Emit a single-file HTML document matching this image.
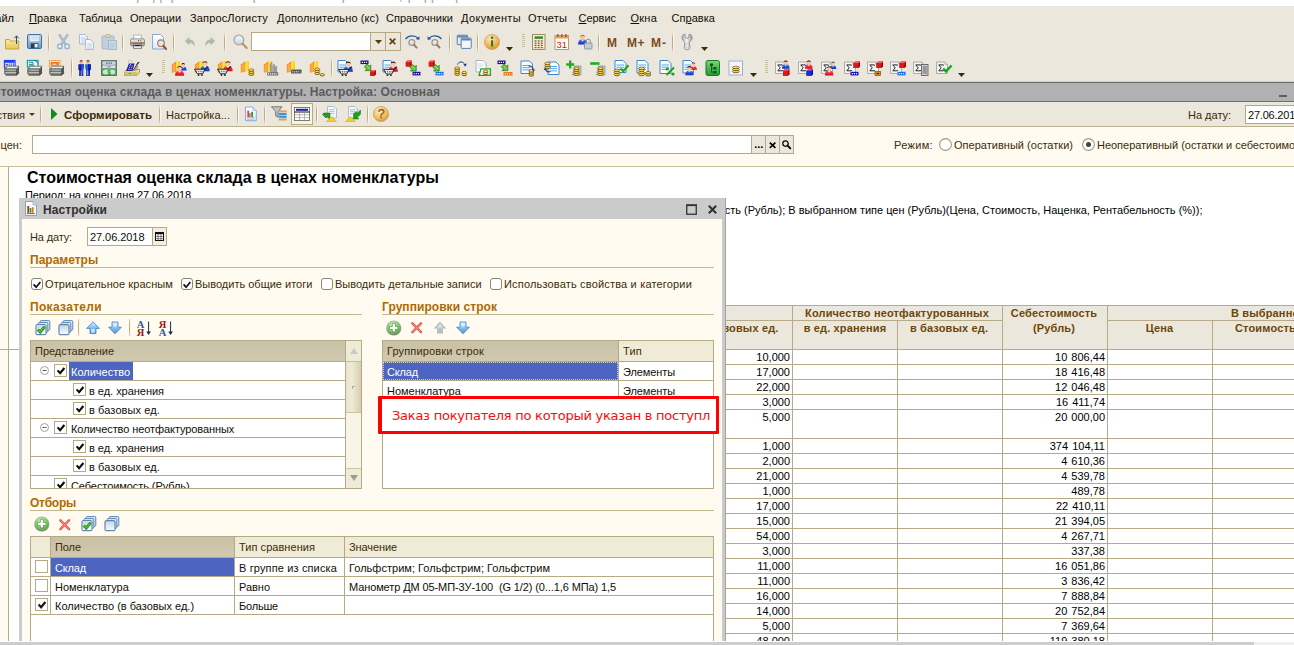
<!DOCTYPE html>
<html lang="ru"><head><meta charset="utf-8"><title>Стоимостная оценка склада в ценах номенклатуры</title>
<style>
html,body{margin:0;padding:0;}
body{width:1294px;height:645px;overflow:hidden;background:#fff;font-family:"Liberation Sans",sans-serif;font-size:11px;color:#000;}
#root{position:absolute;left:0;top:0;width:1294px;height:645px;overflow:hidden;background:#fff;}
#root div{position:absolute;box-sizing:border-box;}
svg{position:absolute;overflow:visible;}
.t{position:absolute;white-space:nowrap;font-size:11px;line-height:14px;height:14px;margin-top:-11px;color:#120e06;}
.b{font-weight:bold;}
.br{color:#3d2b0a;}
.hd{font-weight:bold;color:#b06a02;font-size:12px;}
.w{color:#fff;}
.ar{color:#000;}
.rh{font-weight:bold;color:#6b4808;letter-spacing:0.15px;}
.title{font-size:16px;font-weight:bold;line-height:20px;height:20px;margin-top:-16px;color:#000;}
.red{font-family:"DejaVu Sans",sans-serif;font-size:13px;color:#ff0a0a;line-height:16px;height:16px;margin-top:-13px;}

</style></head>
<body>
<div id="root">
<div style="left:0px;top:0px;width:500px;height:6px;background:#fff;overflow:hidden;"><span class="t" style="left:125px;top:-1px;font-size:15px;color:#a8a8a8;letter-spacing:0.3px;">Предприятие - Управление торговлей, редакция 10.3 / Администратор</span></div>
<div style="left:0px;top:6px;width:1294px;height:76px;background:#ece7dc;"></div>
<span id="t1" class="t " style="right:1280px;top:21.5px;">Файл</span>
<span id="t2" class="t" style="left:29px;top:21.5px;letter-spacing:0.138px;"><u>П</u>равка</span>
<span id="t3" class="t " style="left:79px;top:21.5px;letter-spacing:-0.020px;">Таблица</span>
<span id="t4" class="t " style="left:130px;top:21.5px;letter-spacing:-0.059px;">Операции</span>
<span id="t5" class="t " style="left:190px;top:21.5px;letter-spacing:0.145px;">ЗапросЛогисту</span>
<span id="t6" class="t " style="left:277px;top:21.5px;letter-spacing:0.111px;">Дополнительно (кс)</span>
<span id="t7" class="t " style="left:386px;top:21.5px;letter-spacing:0.033px;">Справочники</span>
<span id="t8" class="t " style="left:461px;top:21.5px;letter-spacing:0.366px;">Документы</span>
<span id="t9" class="t " style="left:528px;top:21.5px;letter-spacing:0.161px;">Отчеты</span>
<span id="t10" class="t" style="left:578.5px;top:21.5px;letter-spacing:-0.031px;"><u>С</u>ервис</span>
<span id="t11" class="t" style="left:630.5px;top:21.5px;letter-spacing:0.230px;"><u>О</u>кна</span>
<span id="t12" class="t" style="left:671.5px;top:21.5px;letter-spacing:0.047px;">Сп<u>р</u>авка</span>
<svg width="0" height="0" style="left:0;top:0"><defs><linearGradient id="gFold" x1="0" y1="0" x2="0" y2="1"><stop offset="0" stop-color="#fbe9a0"/><stop offset="1" stop-color="#e8c558"/></linearGradient><linearGradient id="gSave" x1="0" y1="0" x2="0" y2="1"><stop offset="0" stop-color="#c4dcf0"/><stop offset="1" stop-color="#6a9ac8"/></linearGradient><linearGradient id="gPage" x1="0" y1="0" x2="0" y2="1"><stop offset="0" stop-color="#ffffff"/><stop offset="1" stop-color="#dbe9f7"/></linearGradient><linearGradient id="gOr" x1="0" y1="0" x2="1" y2="0"><stop offset="0" stop-color="#ffd24a"/><stop offset="1" stop-color="#f08a12"/></linearGradient><linearGradient id="gOrange" x1="0" y1="0" x2="0" y2="1"><stop offset="0" stop-color="#ffdf9a"/><stop offset="1" stop-color="#e79a2a"/></linearGradient><linearGradient id="gRed" x1="0" y1="0" x2="0" y2="1"><stop offset="0" stop-color="#ff5a5a"/><stop offset="1" stop-color="#d80016"/></linearGradient><linearGradient id="gBlue" x1="0" y1="0" x2="0" y2="1"><stop offset="0" stop-color="#4a7cf0"/><stop offset="1" stop-color="#0a2fc0"/></linearGradient><linearGradient id="gGreen" x1="0" y1="0" x2="0" y2="1"><stop offset="0" stop-color="#7ad67a"/><stop offset="1" stop-color="#1f9a2c"/></linearGradient><linearGradient id="gGold" x1="0" y1="0" x2="0" y2="1"><stop offset="0" stop-color="#fff27a"/><stop offset="1" stop-color="#f0b000"/></linearGradient><linearGradient id="gGrey" x1="0" y1="0" x2="0" y2="1"><stop offset="0" stop-color="#f4f4f4"/><stop offset="1" stop-color="#a8a8a8"/></linearGradient><linearGradient id="gLens" x1="0" y1="0" x2="0" y2="1"><stop offset="0" stop-color="#f4f9ff"/><stop offset="1" stop-color="#bcd6f2"/></linearGradient><linearGradient id="gUp" x1="0" y1="0" x2="0" y2="1"><stop offset="0" stop-color="#d9ecff"/><stop offset="1" stop-color="#3f8fe0"/></linearGradient></defs></svg>
<svg style="left:4px;top:34px" width="16" height="16" viewBox="0 0 16 16"><path d="M1.5 5.5 h4 l1.2 1.5 h8 v8 h-13.2z" fill="url(#gFold)" stroke="#c9a23c" stroke-width="1"/><path d="M12.5 10 V2.2 M10.3 4.3 L12.5 1.8 L14.7 4.3" fill="none" stroke="#24566a" stroke-width="1"/></svg>
<svg style="left:27px;top:34px" width="16" height="16" viewBox="0 0 16 16"><rect x="0.5" y="0.5" width="14" height="14" rx="1.3" fill="url(#gSave)" stroke="#3f6f9c"/><rect x="2.8" y="1.2" width="9.4" height="6" fill="#f4f9ff" stroke="#9bbad6" stroke-width=".6"/><path d="M4 3.2h7.5M4 5h7.5" stroke="#a7cde6" stroke-width=".9"/><rect x="3.8" y="9.3" width="7.6" height="4.8" fill="#2b3f55"/><rect x="7.6" y="10" width="3.1" height="3.5" fill="#e8eef5"/></svg>
<div style="left:48px;top:33px;width:1px;height:19px;background:linear-gradient(#e4dcc4,#b9ac84 30%,#b9ac84 70%,#e4dcc4);"></div>
<div style="left:49px;top:33px;width:1px;height:19px;background:linear-gradient(#f3efe2,#fbf8ee 30%,#fbf8ee 70%,#f3efe2);"></div>
<svg style="left:56.5px;top:34px" width="16" height="16" viewBox="0 0 16 16"><path d="M2.2 0.4 L8.6 10.4 M10.8 0.4 L4.4 10.4" stroke="#9bb3c9" stroke-width="2.5" fill="none"/><path d="M2.6 0.8 L8.2 9.6 M10.4 0.8 L4.8 9.6" stroke="#b9cbdb" stroke-width=".7" fill="none"/><rect x="0.9" y="10.3" width="4" height="4.2" rx=".9" fill="#edf1f5" stroke="#9bb3c9" stroke-width="1.5"/><rect x="8.1" y="10.3" width="4" height="4.2" rx=".9" fill="#edf1f5" stroke="#9bb3c9" stroke-width="1.5"/></svg>
<svg style="left:78px;top:34px" width="16" height="16" viewBox="0 0 16 16"><path d="M1.5 0.5h5.5l2.5 2.5v7h-8z" fill="#eef4fb" stroke="#9fb6cf" stroke-width=".9"/><path d="M3 4h5M3 6h5M3 8h5" stroke="#b7c7d8" stroke-width=".8"/><path d="M7.5 5.5h5l3 3v7h-8z" fill="#f4f8fd" stroke="#9fb6cf" stroke-width=".9"/><path d="M9 10h5M9 12h5M9 14h5" stroke="#b0c2d6" stroke-width=".8"/></svg>
<svg style="left:101px;top:34px" width="16" height="16" viewBox="0 0 16 16"><rect x="1" y="2" width="12" height="13" rx="1" fill="#c3d0dc" stroke="#9fb3c6" stroke-width=".9"/><rect x="4.5" y="0.5" width="5" height="3" rx="1" fill="#d9d2b3" stroke="#b3ac8d" stroke-width=".7"/><rect x="7.5" y="6.5" width="8" height="9" fill="#c9d8e6" stroke="#9fb6cf" stroke-width=".9"/><path d="M9 10h5M9 12h5M9 14h4" stroke="#a9bfd4" stroke-width=".8"/></svg>
<div style="left:122px;top:33px;width:1px;height:19px;background:linear-gradient(#e4dcc4,#b9ac84 30%,#b9ac84 70%,#e4dcc4);"></div>
<div style="left:123px;top:33px;width:1px;height:19px;background:linear-gradient(#f3efe2,#fbf8ee 30%,#fbf8ee 70%,#f3efe2);"></div>
<svg style="left:130px;top:34px" width="15" height="15.5" viewBox="0 0 16 16"><rect x="4" y="0.8" width="8" height="5.5" fill="#f8fbff" stroke="#9aa7b8" stroke-width=".8"/><rect x="0.6" y="5" width="14.8" height="7.5" rx="1.5" fill="url(#gGrey)" stroke="#7d746c" stroke-width=".9"/><rect x="0.8" y="8.3" width="14.4" height="2.2" fill="#a3877c"/><rect x="8.5" y="6.3" width="1.3" height="1.1" fill="#e02020"/><rect x="10.8" y="6.3" width="1.3" height="1.1" fill="#20b020"/><rect x="3.6" y="10.3" width="8.8" height="4.6" fill="#fff" stroke="#555" stroke-width=".8"/><rect x="4.5" y="11.2" width="7" height="1.6" fill="#222"/></svg>
<svg style="left:151px;top:34px" width="16" height="16" viewBox="0 0 16 16"><path d="M1.5 0.5h8l3 3v11.5h-11z" fill="url(#gPage)" stroke="#7fa0c8" stroke-width=".9"/><circle cx="10" cy="9.2" r="3.3" fill="#d3e6fa" stroke="#b27c5c" stroke-width="1.2"/><path d="M12.4 11.8 L15 15" stroke="#9a5a3a" stroke-width="2.2" stroke-linecap="round"/></svg>
<div style="left:173px;top:33px;width:1px;height:19px;background:linear-gradient(#e4dcc4,#b9ac84 30%,#b9ac84 70%,#e4dcc4);"></div>
<div style="left:174px;top:33px;width:1px;height:19px;background:linear-gradient(#f3efe2,#fbf8ee 30%,#fbf8ee 70%,#f3efe2);"></div>
<svg style="left:184px;top:36px" width="11" height="11" viewBox="0 0 12 12"><path d="M1 5.5 L6 1.2 V4 C10.5 4 12 7 11.2 11.5 C10.3 8.6 9 7.4 6 7.4 V10z" fill="#a9bba3" stroke="#c2cfbd" stroke-width=".5"/></svg>
<svg style="left:204.5px;top:36px" width="11" height="11" viewBox="0 0 12 12"><g transform="translate(12,0) scale(-1,1)"><path d="M1 5.5 L6 1.2 V4 C10.5 4 12 7 11.2 11.5 C10.3 8.6 9 7.4 6 7.4 V10z" fill="#a9bba3" stroke="#c2cfbd" stroke-width=".5"/></g></svg>
<div style="left:224px;top:33px;width:1px;height:19px;background:linear-gradient(#e4dcc4,#b9ac84 30%,#b9ac84 70%,#e4dcc4);"></div>
<div style="left:225px;top:33px;width:1px;height:19px;background:linear-gradient(#f3efe2,#fbf8ee 30%,#fbf8ee 70%,#f3efe2);"></div>
<svg style="left:233px;top:34px" width="15" height="15" viewBox="0 0 16 16"><circle cx="6.3" cy="6.3" r="5.2" fill="url(#gLens)" stroke="#b7a08e" stroke-width="1.3"/><path d="M10.2 10.4 L14.6 15" stroke="#b8906c" stroke-width="2.3" stroke-linecap="round"/></svg>
<div style="left:251px;top:32px;width:150px;height:19px;background:#fff;border:1px solid #b5aa86;"></div>
<div style="left:370px;top:33px;width:16px;height:17px;background:#ece7dc;border-left:1px solid #b5aa86;border-right:1px solid #b5aa86;"></div>
<div style="left:386px;top:33px;width:14px;height:17px;background:#ece7dc;"></div>
<svg style="left:374.7px;top:40px" width="7" height="4" viewBox="0 0 7 4"><path d="M0 0 H7 L3.5 4z" fill="#5a3c00"/></svg>
<svg style="left:389.3px;top:38.2px" width="7" height="6.8" viewBox="0 0 7 6.8"><path d="M0.7 0.6 L6.3 6.2 M6.3 0.6 L0.7 6.2" stroke="#66460c" stroke-width="1.7"/></svg>
<svg style="left:404px;top:34px" width="16" height="16" viewBox="0 0 16 16"><path d="M1.5 5 C5 1 11 1 14.5 4.6" fill="none" stroke="#2a5c9c" stroke-width="1.2"/><path d="M15.6 2.2 L15.2 6 L11.6 5z" fill="#2a5c9c"/><circle cx="7.8" cy="8.6" r="2.9" fill="url(#gLens)" stroke="#a98f82" stroke-width="1.2"/><path d="M10 10.8 L12.6 13.6" stroke="#a27a66" stroke-width="2" stroke-linecap="round"/></svg>
<svg style="left:427px;top:34px" width="16" height="16" viewBox="0 0 16 16"><g transform="translate(16,0) scale(-1,1)"><path d="M1.5 5 C5 1 11 1 14.5 4.6" fill="none" stroke="#2a5c9c" stroke-width="1.2"/><path d="M15.6 2.2 L15.2 6 L11.6 5z" fill="#2a5c9c"/></g><circle cx="7.8" cy="8.6" r="2.9" fill="url(#gLens)" stroke="#a98f82" stroke-width="1.2"/><path d="M10 10.8 L12.6 13.6" stroke="#a27a66" stroke-width="2" stroke-linecap="round"/></svg>
<div style="left:449px;top:33px;width:1px;height:19px;background:linear-gradient(#e4dcc4,#b9ac84 30%,#b9ac84 70%,#e4dcc4);"></div>
<div style="left:450px;top:33px;width:1px;height:19px;background:linear-gradient(#f3efe2,#fbf8ee 30%,#fbf8ee 70%,#f3efe2);"></div>
<svg style="left:456px;top:34px" width="16" height="16" viewBox="0 0 16 16"><rect x="1.2" y="1.2" width="10.5" height="9.5" rx=".8" fill="#dfe8f3" stroke="#5f7ea6" stroke-width="1"/><rect x="1.7" y="1.7" width="9.5" height="1.8" fill="#5d86b4"/><rect x="5.2" y="4.2" width="10" height="10.2" rx=".8" fill="#f2f6fb" stroke="#5f7ea6" stroke-width="1"/><rect x="5.7" y="4.7" width="9" height="1.8" fill="#5d86b4"/></svg>
<div style="left:477px;top:33px;width:1px;height:19px;background:linear-gradient(#e4dcc4,#b9ac84 30%,#b9ac84 70%,#e4dcc4);"></div>
<div style="left:478px;top:33px;width:1px;height:19px;background:linear-gradient(#f3efe2,#fbf8ee 30%,#fbf8ee 70%,#f3efe2);"></div>
<svg style="left:484px;top:34px" width="16" height="16" viewBox="0 0 16 16"><defs><radialGradient id="gInfo" cx=".4" cy=".3" r=".8"><stop offset="0" stop-color="#ffe9bf"/><stop offset=".6" stop-color="#f0b24e"/><stop offset="1" stop-color="#c98a2c"/></radialGradient></defs><circle cx="8" cy="8" r="7.6" fill="url(#gInfo)" stroke="#c9a061" stroke-width=".7"/><rect x="7" y="6.3" width="2.1" height="6.2" fill="#2d7d1e"/><circle cx="8.05" cy="3.8" r="1.3" fill="#2d7d1e"/></svg>
<svg style="left:506px;top:47px" width="7" height="4" viewBox="0 0 7 4"><path d="M0 0 H7 L3.5 4z" fill="#3a2a08"/></svg>
<div style="left:522px;top:34px;width:3px;height:1px;background:#c9bf9b;"></div>
<div style="left:522px;top:36px;width:3px;height:1px;background:#c9bf9b;"></div>
<div style="left:522px;top:38px;width:3px;height:1px;background:#c9bf9b;"></div>
<div style="left:522px;top:40px;width:3px;height:1px;background:#c9bf9b;"></div>
<div style="left:522px;top:42px;width:3px;height:1px;background:#c9bf9b;"></div>
<div style="left:522px;top:44px;width:3px;height:1px;background:#c9bf9b;"></div>
<div style="left:522px;top:46px;width:3px;height:1px;background:#c9bf9b;"></div>
<svg style="left:531px;top:34px" width="16" height="16" viewBox="0 0 16 16"><rect x="1.5" y="0.5" width="12.5" height="15" fill="#f6efcf" stroke="#a08d5c" stroke-width="1"/><rect x="3.5" y="2.3" width="8.5" height="2.6" fill="#3f8a3f"/><rect x="3.6" y="6.3" width="1.9" height="1.3" fill="#6d6143"/><rect x="6.7" y="6.3" width="1.9" height="1.3" fill="#6d6143"/><rect x="9.8" y="6.3" width="1.9" height="1.3" fill="#6d6143"/><rect x="3.6" y="8.5" width="1.9" height="1.3" fill="#6d6143"/><rect x="6.7" y="8.5" width="1.9" height="1.3" fill="#6d6143"/><rect x="9.8" y="8.5" width="1.9" height="1.3" fill="#d0302a"/><rect x="3.6" y="10.7" width="1.9" height="1.3" fill="#6d6143"/><rect x="6.7" y="10.7" width="1.9" height="1.3" fill="#6d6143"/><rect x="9.8" y="10.7" width="1.9" height="1.3" fill="#d0302a"/><rect x="3.6" y="12.9" width="1.9" height="1.3" fill="#6d6143"/><rect x="6.7" y="12.9" width="1.9" height="1.3" fill="#6d6143"/><rect x="9.8" y="12.9" width="1.9" height="1.3" fill="#d0302a"/></svg>
<svg style="left:554px;top:34px" width="16" height="16" viewBox="0 0 16 16"><rect x="1" y="1.5" width="13.5" height="14" fill="#fffdf4" stroke="#b59c6a" stroke-width="1"/><rect x="1" y="1.5" width="13.5" height="3" fill="#e8a05a"/><rect x="3" y="0.3" width="1.6" height="2.6" fill="#8a5a2a"/><rect x="7" y="0.3" width="1.6" height="2.6" fill="#8a5a2a"/><rect x="11" y="0.3" width="1.6" height="2.6" fill="#8a5a2a"/><text x="7.8" y="13.6" text-anchor="middle" font-family="Liberation Sans,sans-serif" font-size="9.5" fill="#d01818">31</text></svg>
<svg style="left:577px;top:34px" width="16" height="16" viewBox="0 0 16 16"><path d="M1.0899999999999999 10.475 C1.0899999999999999 5.960000000000001 3.4 5.33 5.5 5.33 C7.6 5.33 9.91 5.960000000000001 9.91 10.475z" fill="url(#gBlue)"/><path d="M3.82 5.4350000000000005 L5.5 7.64 L7.18 5.4350000000000005z" fill="#fff" opacity=".85"/><circle cx="5.5" cy="3.2300000000000004" r="2.3100000000000005" fill="#f6c9a4"/><path d="M3.085 3.02 C3.085 0.07999999999999996 7.915 0.07999999999999996 7.915 3.02 C6.76 1.55 4.24 1.55 3.085 3.02z" fill="#c07818"/><rect x="7.5" y="9" width="7.5" height="6" rx=".8" fill="#c8ccd4" stroke="#7d8694" stroke-width=".8"/><path d="M9.3 9 V7.3 a2 2 0 0 1 4 0 V9" fill="none" stroke="#8a929e" stroke-width="1.1"/></svg>
<div style="left:598px;top:33px;width:1px;height:19px;background:linear-gradient(#e4dcc4,#b9ac84 30%,#b9ac84 70%,#e4dcc4);"></div>
<div style="left:599px;top:33px;width:1px;height:19px;background:linear-gradient(#f3efe2,#fbf8ee 30%,#fbf8ee 70%,#f3efe2);"></div>
<span id="t13" class="t b" style="left:607px;top:47px;color:#7a4a1e;font-size:12px;letter-spacing:1.000px;">M</span>
<span id="t14" class="t b" style="left:627px;top:47px;color:#7a4a1e;font-size:12px;letter-spacing:0.492px;">M+</span>
<span id="t15" class="t b" style="left:651px;top:47px;color:#7a4a1e;font-size:12px;letter-spacing:1.000px;">M-</span>
<div style="left:672px;top:33px;width:1px;height:19px;background:linear-gradient(#e4dcc4,#b9ac84 30%,#b9ac84 70%,#e4dcc4);"></div>
<div style="left:673px;top:33px;width:1px;height:19px;background:linear-gradient(#f3efe2,#fbf8ee 30%,#fbf8ee 70%,#f3efe2);"></div>
<svg style="left:680px;top:34px" width="16" height="16" viewBox="0 0 16 16"><defs><linearGradient id="gWr" x1="0" y1="0" x2="1" y2="0"><stop offset="0" stop-color="#a4a4a4"/><stop offset=".45" stop-color="#f6f6f6"/><stop offset="1" stop-color="#9a9a9a"/></linearGradient></defs><path d="M3.2 0.6 L5.2 0.4 L5.2 3.6 Q7.1 5 8.9 3.6 L8.9 0.4 L10.9 0.6 Q12.6 2.4 12.1 4.6 Q11.4 6.8 9.4 8.2 L9.9 14.2 Q9.8 15.8 7.1 15.8 Q4.4 15.8 4.3 14.2 L4.8 8.2 Q2.8 6.8 2.1 4.6 Q1.6 2.4 3.2 0.6z" fill="url(#gWr)" stroke="#8c8c8c" stroke-width=".8"/><path d="M6.2 9.6 H8 V14 H6.2z" fill="#fbfbfb" stroke="#b0b0b0" stroke-width=".5"/></svg>
<svg style="left:701px;top:47px" width="7" height="4" viewBox="0 0 7 4"><path d="M0 0 H7 L3.5 4z" fill="#3a2a08"/></svg>
<svg style="left:4px;top:60px" width="16" height="16" viewBox="0 0 16 16"><rect x="0.5" y="0.5" width="10.5" height="7.5" fill="#fff" stroke="#1a3cff" stroke-width="1.2"/><rect x="1" y="1" width="9.5" height="1.8" fill="#1a3cff"/><path d="M1.5 4.3h3M1.5 6h3" stroke="#444" stroke-width="1"/><path d="M5.8 3.2v4.5M7.6 3.2v4.5M9.4 3.2v4.5" stroke="#2a5cff" stroke-width=".9"/><path d="M0.8 9 L3.5 6.2 H15 L12.5 9z" fill="#f0f0f0" stroke="#555" stroke-width=".7"/><path d="M0.8 9 H12.5 V14 H0.8z" fill="#bdbdbd" stroke="#333" stroke-width=".7"/><path d="M12.5 9 L15 6.2 V11.5 L12.5 14z" fill="#555"/><path d="M0.8 11.3 H12.5" stroke="#444" stroke-width=".8"/><rect x="2" y="9.7" width="1.4" height=".9" fill="#20c020"/><path d="M1.5 15 H12.5 L15 12.3" fill="none" stroke="#222" stroke-width="1.1"/></svg>
<svg style="left:27px;top:60px" width="16" height="16" viewBox="0 0 16 16"><rect x="0.5" y="0.5" width="10.5" height="6.5" fill="#fff" stroke="#1f9a9a" stroke-width="1.3"/><path d="M2 2.3h4v2h-4 M2 5.2h5.5" fill="none" stroke="#1f8f8f" stroke-width="1"/><path d="M8 0.5 L11 3.5" stroke="#2a3cd8" stroke-width="1"/><path d="M0.8 9 L3.5 6.2 H15 L12.5 9z" fill="#f0f0f0" stroke="#555" stroke-width=".7"/><path d="M0.8 9 H12.5 V14 H0.8z" fill="#bdbdbd" stroke="#333" stroke-width=".7"/><path d="M12.5 9 L15 6.2 V11.5 L12.5 14z" fill="#555"/><path d="M0.8 11.3 H12.5" stroke="#444" stroke-width=".8"/><rect x="2" y="9.7" width="1.4" height=".9" fill="#20c020"/><path d="M1.5 15 H12.5 L15 12.3" fill="none" stroke="#222" stroke-width="1.1"/></svg>
<svg style="left:49px;top:60px" width="16" height="16" viewBox="0 0 16 16"><rect x="0.5" y="0.5" width="10.5" height="6.5" fill="#fbe4cf" stroke="#f08a2a" stroke-width="1.2" stroke-dasharray="1.2 .6"/><rect x="1.8" y="2" width="8" height="3.6" fill="#f0701a"/><rect x="3.5" y="3.6" width="4" height="1.2" fill="#fbe4cf"/><path d="M0.8 9 L3.5 6.2 H15 L12.5 9z" fill="#f0f0f0" stroke="#555" stroke-width=".7"/><path d="M0.8 9 H12.5 V14 H0.8z" fill="#bdbdbd" stroke="#333" stroke-width=".7"/><path d="M12.5 9 L15 6.2 V11.5 L12.5 14z" fill="#555"/><path d="M0.8 11.3 H12.5" stroke="#444" stroke-width=".8"/><rect x="2" y="9.7" width="1.4" height=".9" fill="#20c020"/><path d="M1.5 15 H12.5 L15 12.3" fill="none" stroke="#222" stroke-width="1.1"/></svg>
<div style="left:71px;top:58px;width:1px;height:20px;background:linear-gradient(#e4dcc4,#b9ac84 30%,#b9ac84 70%,#e4dcc4);"></div>
<div style="left:72px;top:58px;width:1px;height:20px;background:linear-gradient(#f3efe2,#fbf8ee 30%,#fbf8ee 70%,#f3efe2);"></div>
<svg style="left:77px;top:60px" width="16" height="16" viewBox="0 0 16 16"><circle cx="4.2" cy="2.2" r="1.7" fill="#e9b58c"/><path d="M2.5 1.6 a1.7 1.7 0 0 1 3.4 0z" fill="#6a3a18"/><path d="M1.4000000000000004 4.2 H7.0 V10 H6.2 V15.5 H4.6000000000000005 V10.5 H3.8000000000000003 V15.5 H2.2 V10 H1.4000000000000004z" fill="#0c1c9c"/><path d="M4.2 4.2 H7.0 V10 H6.2 V15.5 H4.6000000000000005 V10.5 H4.2z" fill="#2a4ed0"/><rect x="2.2" y="15" width="1.6" height=".9" fill="#5a1a10"/><rect x="4.6000000000000005" y="15" width="1.6" height=".9" fill="#5a1a10"/><circle cx="11" cy="2.2" r="1.7" fill="#e9b58c"/><path d="M9.3 1.6 a1.7 1.7 0 0 1 3.4 0z" fill="#6a3a18"/><path d="M8.2 4.2 H13.8 V10 H13 V15.5 H11.4 V10.5 H10.6 V15.5 H9 V10 H8.2z" fill="#2e5ee0"/><path d="M11 4.2 H13.8 V10 H13 V15.5 H11.4 V10.5 H11z" fill="#0c22a0"/><rect x="9" y="15" width="1.6" height=".9" fill="#5a1a10"/><rect x="11.4" y="15" width="1.6" height=".9" fill="#5a1a10"/><path d="M6.2 8.2 L7.6 9.4 L9 8.2 V9.8 H6.2z" fill="#f3d2b8"/></svg>
<svg style="left:101px;top:60px" width="16" height="16" viewBox="0 0 16 16"><rect x="0.5" y="0.5" width="15" height="15" fill="#8f9f8f" stroke="#5f7a5f" stroke-width="1"/><rect x="1.5" y="1.5" width="13" height="3.2" rx="1.4" fill="#c9d2e8"/><rect x="1.5" y="5.4" width="13" height="2.8" rx="1.2" fill="#d8dcf8"/><rect x="1.3" y="9" width="13.4" height="6" rx="2.6" fill="#bff0bf" stroke="#2f8a3f" stroke-width=".9"/><text x="8" y="14.6" text-anchor="middle" font-family="Liberation Sans,sans-serif" font-weight="bold" font-size="6.5" fill="#2f8a3f">$</text><path d="M5 3.1h6" stroke="#3a4a8a" stroke-width="1" stroke-dasharray="1.5 .8"/><path d="M6 6.8h4" stroke="#7a7a9a" stroke-width=".8"/></svg>
<svg style="left:124px;top:60px" width="16" height="16" viewBox="0 0 16 16"><path d="M0.5 12 L3 9.5 H15.5 V12.5 L13 15.5 H0.5z" fill="#e8dd9a" stroke="#8a7f3a" stroke-width=".7"/><path d="M0.5 12 H13 V15.5 H0.5z" fill="#d0c36a"/><rect x="4.5" y="13" width="2.4" height=".9" fill="#d06a1a"/><path d="M2 11 L5 3.5 L10.5 3.5 L8.5 11z" fill="#1a1a98"/><path d="M4.2 9.5h1.2M6.4 9.5h1.2M4.8 7.7h1.2M7 7.7h1.2M5.4 5.9h1.2M7.6 5.9h1.2M6 4.3h1.2" stroke="#c9d4ff" stroke-width="1"/><rect x="8.2" y="5.2" width="1.2" height="1.2" fill="#e01818"/><path d="M4.5 0.8 h3.5 v2.2 h-3.5z" fill="#fff" stroke="#999" stroke-width=".5"/><path d="M9.5 10.5 L13.8 3.2 L15.2 2.2" fill="none" stroke="#222" stroke-width="1.1"/><path d="M9 11 L13 5 L14.5 6.5 L12 11z" fill="#a9a07a"/></svg>
<svg style="left:146px;top:73px" width="7" height="4" viewBox="0 0 7 4"><path d="M0 0 H7 L3.5 4z" fill="#3a2a08"/></svg>
<div style="left:162px;top:60px;width:3px;height:1px;background:#c9bf9b;"></div>
<div style="left:162px;top:62px;width:3px;height:1px;background:#c9bf9b;"></div>
<div style="left:162px;top:64px;width:3px;height:1px;background:#c9bf9b;"></div>
<div style="left:162px;top:66px;width:3px;height:1px;background:#c9bf9b;"></div>
<div style="left:162px;top:68px;width:3px;height:1px;background:#c9bf9b;"></div>
<div style="left:162px;top:70px;width:3px;height:1px;background:#c9bf9b;"></div>
<div style="left:162px;top:72px;width:3px;height:1px;background:#c9bf9b;"></div>
<svg style="left:171px;top:60px" width="16" height="16" viewBox="0 0 16 16"><path d="M0.8 4.5 L5.4 1.3 L5.4 11.6 L0.8 12.8z" fill="#f28c1c"/><path d="M5.4 1.3 H8.7 V10.6 L5.4 11.6z" fill="#ffe326"/><path d="M7.8 1.3 H8.7 V10.6 L7.8 10.9z" fill="#f7c412"/><path d="M0.8 6.9 L5.4 4.5" stroke="#ffd58a" stroke-width=".55"/><path d="M0.8 9.2 L5.4 6.799999999999999" stroke="#ffd58a" stroke-width=".55"/><path d="M0.8 11.4 L5.4 9.0" stroke="#ffd58a" stroke-width=".55"/><path d="M3.1 3 V12.2" stroke="#ffd58a" stroke-width=".5"/><path d="M8.84 10.4 C8.84 6.96 10.6 6.4799999999999995 12.2 6.4799999999999995 C13.799999999999999 6.4799999999999995 15.559999999999999 6.96 15.559999999999999 10.4z" fill="url(#gBlue)"/><path d="M10.919999999999998 6.5600000000000005 L12.2 8.24 L13.48 6.5600000000000005z" fill="#fff" opacity=".85"/><circle cx="12.2" cy="4.88" r="1.7600000000000002" fill="#f6c9a4"/><path d="M10.36 4.72 C10.36 2.4799999999999995 14.04 2.4799999999999995 14.04 4.72 C13.16 3.5999999999999996 11.239999999999998 3.5999999999999996 10.36 4.72z" fill="#3a1a08"/><path d="M4.063999999999999 15.860000000000001 C4.063999999999999 11.216000000000001 6.4399999999999995 10.568 8.6 10.568 C10.76 10.568 13.136 11.216000000000001 13.136 15.860000000000001z" fill="url(#gRed)"/><path d="M6.872 10.676 L8.6 12.943999999999999 L10.328 10.676z" fill="#fff" opacity=".85"/><circle cx="8.6" cy="8.408" r="2.3760000000000003" fill="#f6c9a4"/><path d="M6.116 8.192 C6.116 5.167999999999999 11.084 5.167999999999999 11.084 8.192 C9.895999999999999 6.68 7.303999999999999 6.68 6.116 8.192z" fill="#3a1a08"/></svg>
<svg style="left:194px;top:60px" width="16" height="16" viewBox="0 0 16 16"><path d="M0.8 4.5 L5.4 1.3 L5.4 11.6 L0.8 12.8z" fill="#f28c1c"/><path d="M5.4 1.3 H8.7 V10.6 L5.4 11.6z" fill="#ffe326"/><path d="M7.8 1.3 H8.7 V10.6 L7.8 10.9z" fill="#f7c412"/><path d="M0.8 6.9 L5.4 4.5" stroke="#ffd58a" stroke-width=".55"/><path d="M0.8 9.2 L5.4 6.799999999999999" stroke="#ffd58a" stroke-width=".55"/><path d="M0.8 11.4 L5.4 9.0" stroke="#ffd58a" stroke-width=".55"/><path d="M3.1 3 V12.2" stroke="#ffd58a" stroke-width=".5"/><path d="M6.379999999999999 11.250000000000002 C6.379999999999999 6.5200000000000005 8.8 5.859999999999999 11 5.859999999999999 C13.2 5.859999999999999 15.620000000000001 6.5200000000000005 15.620000000000001 11.250000000000002z" fill="url(#gBlue)"/><path d="M9.24 5.970000000000001 L11 8.280000000000001 L12.76 5.970000000000001z" fill="#fff" opacity=".85"/><circle cx="11" cy="3.66" r="2.4200000000000004" fill="#f6c9a4"/><path d="M8.47 3.4400000000000004 C8.47 0.36 13.53 0.36 13.53 3.4400000000000004 C12.32 1.9000000000000001 9.68 1.9000000000000001 8.47 3.4400000000000004z" fill="#3a1a08"/><path d="M0.5 9.2 H11.0 L8.7 13.799999999999999 H3.3z" fill="#f2f2f2" stroke="#2a2a2a" stroke-width="1"/><path d="M10.5 9.6 L13.9 6.6" stroke="#2a2a2a" stroke-width="1.4"/><path d="M2.1 11.5 H9.9" stroke="#555" stroke-width="1.5" stroke-dasharray=".9 .9"/><circle cx="4.5" cy="15.0" r=".9" fill="#222"/><circle cx="7.9" cy="15.0" r=".9" fill="#222"/></svg>
<svg style="left:217px;top:60px" width="16" height="16" viewBox="0 0 16 16"><path d="M0.8 4.5 L5.4 1.3 L5.4 11.6 L0.8 12.8z" fill="#f28c1c"/><path d="M5.4 1.3 H8.7 V10.6 L5.4 11.6z" fill="#ffe326"/><path d="M7.8 1.3 H8.7 V10.6 L7.8 10.9z" fill="#f7c412"/><path d="M0.8 6.9 L5.4 4.5" stroke="#ffd58a" stroke-width=".55"/><path d="M0.8 9.2 L5.4 6.799999999999999" stroke="#ffd58a" stroke-width=".55"/><path d="M0.8 11.4 L5.4 9.0" stroke="#ffd58a" stroke-width=".55"/><path d="M3.1 3 V12.2" stroke="#ffd58a" stroke-width=".5"/><path d="M6.379999999999999 11.250000000000002 C6.379999999999999 6.5200000000000005 8.8 5.859999999999999 11 5.859999999999999 C13.2 5.859999999999999 15.620000000000001 6.5200000000000005 15.620000000000001 11.250000000000002z" fill="url(#gRed)"/><path d="M9.24 5.970000000000001 L11 8.280000000000001 L12.76 5.970000000000001z" fill="#fff" opacity=".85"/><circle cx="11" cy="3.66" r="2.4200000000000004" fill="#f6c9a4"/><path d="M8.47 3.4400000000000004 C8.47 0.36 13.53 0.36 13.53 3.4400000000000004 C12.32 1.9000000000000001 9.68 1.9000000000000001 8.47 3.4400000000000004z" fill="#3a1a08"/><path d="M0.5 9.2 H11.0 L8.7 13.799999999999999 H3.3z" fill="#f2f2f2" stroke="#2a2a2a" stroke-width="1"/><path d="M10.5 9.6 L13.9 6.6" stroke="#2a2a2a" stroke-width="1.4"/><path d="M2.1 11.5 H9.9" stroke="#555" stroke-width="1.5" stroke-dasharray=".9 .9"/><circle cx="4.5" cy="15.0" r=".9" fill="#222"/><circle cx="7.9" cy="15.0" r=".9" fill="#222"/></svg>
<svg style="left:240px;top:60px" width="16" height="16" viewBox="0 0 16 16"><path d="M0.8 4.5 L5.4 1.3 L5.4 11.6 L0.8 12.8z" fill="#f28c1c"/><path d="M5.4 1.3 H8.7 V10.6 L5.4 11.6z" fill="#ffe326"/><path d="M7.8 1.3 H8.7 V10.6 L7.8 10.9z" fill="#f7c412"/><path d="M0.8 6.9 L5.4 4.5" stroke="#ffd58a" stroke-width=".55"/><path d="M0.8 9.2 L5.4 6.799999999999999" stroke="#ffd58a" stroke-width=".55"/><path d="M0.8 11.4 L5.4 9.0" stroke="#ffd58a" stroke-width=".55"/><path d="M3.1 3 V12.2" stroke="#ffd58a" stroke-width=".5"/><ellipse cx="11.3" cy="14.2" rx="2.58" ry="1.25" fill="url(#gGold)" stroke="#5a3e00" stroke-width=".7"/><path d="M9.72 13.899999999999999 h2.75" stroke="#fffbd0" stroke-width=".5"/><ellipse cx="11.3" cy="12.2" rx="2.58" ry="1.25" fill="url(#gGold)" stroke="#5a3e00" stroke-width=".7"/><path d="M9.72 11.899999999999999 h2.75" stroke="#fffbd0" stroke-width=".5"/><ellipse cx="11.3" cy="10.2" rx="2.58" ry="1.25" fill="url(#gGold)" stroke="#5a3e00" stroke-width=".7"/><path d="M9.72 9.899999999999999 h2.75" stroke="#fffbd0" stroke-width=".5"/></svg>
<svg style="left:263px;top:60px" width="16" height="16" viewBox="0 0 16 16"><path d="M0.8 4.5 L5.4 1.3 L5.4 11.6 L0.8 12.8z" fill="#f28c1c"/><path d="M5.4 1.3 H8.7 V10.6 L5.4 11.6z" fill="#ffe326"/><path d="M7.8 1.3 H8.7 V10.6 L7.8 10.9z" fill="#f7c412"/><path d="M0.8 6.9 L5.4 4.5" stroke="#ffd58a" stroke-width=".55"/><path d="M0.8 9.2 L5.4 6.799999999999999" stroke="#ffd58a" stroke-width=".55"/><path d="M0.8 11.4 L5.4 9.0" stroke="#ffd58a" stroke-width=".55"/><path d="M3.1 3 V12.2" stroke="#ffd58a" stroke-width=".5"/><path d="M7.3 13 V4.2 L8.9 2.6 V13z M10 13 V5.5 L11.4 4.2 V13z M12.4 13 V7 L13.6 6 V13z" fill="#c4c4c4" stroke="#6a6a6a" stroke-width=".6"/><rect x="4.2" y="12.3" width="11" height="3.2" fill="#6c6c6c"/><path d="M5 13.9h9.6" stroke="#f0f0f0" stroke-width="1.6" stroke-dasharray=".9 1"/></svg>
<svg style="left:286px;top:60px" width="16" height="16" viewBox="0 0 16 16"><path d="M0.8 4.5 L5.4 1.3 L5.4 11.6 L0.8 12.8z" fill="#f28c1c"/><path d="M5.4 1.3 H8.7 V10.6 L5.4 11.6z" fill="#ffe326"/><path d="M7.8 1.3 H8.7 V10.6 L7.8 10.9z" fill="#f7c412"/><path d="M0.8 6.9 L5.4 4.5" stroke="#ffd58a" stroke-width=".55"/><path d="M0.8 9.2 L5.4 6.799999999999999" stroke="#ffd58a" stroke-width=".55"/><path d="M0.8 11.4 L5.4 9.0" stroke="#ffd58a" stroke-width=".55"/><path d="M3.1 3 V12.2" stroke="#ffd58a" stroke-width=".5"/><path d="M5 10.6 L6 9.6 H15.6 V12.8 L14.8 13.6 H5z" fill="#5e5e5e"/><path d="M6.2 11.8h7.6" stroke="#e8e8e8" stroke-width="1" stroke-dasharray="1 .9"/></svg>
<svg style="left:309px;top:60px" width="16" height="16" viewBox="0 0 16 16"><path d="M0.8 4.5 L5.4 1.3 L5.4 11.6 L0.8 12.8z" fill="#f28c1c"/><path d="M5.4 1.3 H8.7 V10.6 L5.4 11.6z" fill="#ffe326"/><path d="M7.8 1.3 H8.7 V10.6 L7.8 10.9z" fill="#f7c412"/><path d="M0.8 6.9 L5.4 4.5" stroke="#ffd58a" stroke-width=".55"/><path d="M0.8 9.2 L5.4 6.799999999999999" stroke="#ffd58a" stroke-width=".55"/><path d="M0.8 11.4 L5.4 9.0" stroke="#ffd58a" stroke-width=".55"/><path d="M3.1 3 V12.2" stroke="#ffd58a" stroke-width=".5"/><ellipse cx="8.3" cy="13.4" rx="2.48" ry="1.25" fill="url(#gGold)" stroke="#5a3e00" stroke-width=".7"/><path d="M6.82 13.1 h2.57" stroke="#fffbd0" stroke-width=".5"/><ellipse cx="8.3" cy="11.4" rx="2.48" ry="1.25" fill="url(#gGold)" stroke="#5a3e00" stroke-width=".7"/><path d="M6.82 11.1 h2.57" stroke="#fffbd0" stroke-width=".5"/><ellipse cx="8.3" cy="9.4" rx="2.48" ry="1.25" fill="url(#gGold)" stroke="#5a3e00" stroke-width=".7"/><path d="M6.82 9.1 h2.57" stroke="#fffbd0" stroke-width=".5"/><ellipse cx="13.3" cy="14.8" rx="2.12" ry="1.25" fill="url(#gGold)" stroke="#5a3e00" stroke-width=".7"/><path d="M12.18 14.5 h1.83" stroke="#fffbd0" stroke-width=".5"/></svg>
<div style="left:331px;top:58px;width:1px;height:20px;background:linear-gradient(#e4dcc4,#b9ac84 30%,#b9ac84 70%,#e4dcc4);"></div>
<div style="left:332px;top:58px;width:1px;height:20px;background:linear-gradient(#f3efe2,#fbf8ee 30%,#fbf8ee 70%,#f3efe2);"></div>
<svg style="left:337px;top:60px" width="16" height="16" viewBox="0 0 16 16"><path d="M1.0 0.5 h7.5 l3 3 v8.5 h-10.5z" fill="#fcfdff" stroke="#3b86d6" stroke-width="1"/><path d="M2.5 5.0 h7" stroke="#3aa0e8" stroke-width=".9"/><path d="M2.5 7.2 h7" stroke="#3aa0e8" stroke-width=".9"/><path d="M2.5 9.4 h7" stroke="#3aa0e8" stroke-width=".9"/><path d="M6.579999999999998 11.65 C6.579999999999998 6.920000000000001 9.0 6.26 11.2 6.26 C13.399999999999999 6.26 15.82 6.920000000000001 15.82 11.65z" fill="url(#gBlue)"/><path d="M9.44 6.370000000000001 L11.2 8.68 L12.959999999999999 6.370000000000001z" fill="#fff" opacity=".85"/><circle cx="11.2" cy="4.0600000000000005" r="2.4200000000000004" fill="#f6c9a4"/><path d="M8.67 3.84 C8.67 0.7599999999999999 13.729999999999999 0.7599999999999999 13.729999999999999 3.84 C12.52 2.3 9.879999999999999 2.3 8.67 3.84z" fill="#3a1a08"/><path d="M1.5 9.4 H12.0 L9.7 14.0 H4.3z" fill="#f2f2f2" stroke="#2a2a2a" stroke-width="1"/><path d="M11.5 9.8 L14.9 6.800000000000001" stroke="#2a2a2a" stroke-width="1.4"/><path d="M3.1 11.7 H10.9" stroke="#555" stroke-width="1.5" stroke-dasharray=".9 .9"/><circle cx="5.5" cy="15.2" r=".9" fill="#222"/><circle cx="8.9" cy="15.2" r=".9" fill="#222"/></svg>
<svg style="left:360px;top:60px" width="16" height="16" viewBox="0 0 16 16"><rect x="0.5" y="0.5" width="8" height="3.6" fill="#1a10a8"/><path d="M1.7 2.4 h6" stroke="#fff" stroke-width="1.2" stroke-dasharray="1.2 .9"/><path d="M5.4 5.8 L7.2 4.1 L9.4 6.3 L10.8 4.8999999999999995 V10.6 H5.1000000000000005 L6.6 9.1 L4.4 6.8z" fill="#62c83a" stroke="#1a6a14" stroke-width=".7"/><path d="M7.0 6.2 L9.600000000000001 8.8" stroke="#b8ec8a" stroke-width=".8"/><path d="M10 11.5 L11.5 10 H15.9 V14.4 L14.4 15.9 H10z" fill="#a00000"/><rect x="10" y="11.5" width="4.4" height="4.4" fill="#e01818"/><path d="M10 11.5 L11.5 10 H15.9 L14.4 11.5z" fill="#ff6a6a"/></svg>
<svg style="left:382px;top:60px" width="16" height="16" viewBox="0 0 16 16"><path d="M1.0 0.5 h7.5 l3 3 v8.5 h-10.5z" fill="#fcfdff" stroke="#3b86d6" stroke-width="1"/><path d="M2.5 5.0 h7" stroke="#3aa0e8" stroke-width=".9"/><path d="M2.5 7.2 h7" stroke="#3aa0e8" stroke-width=".9"/><path d="M2.5 9.4 h7" stroke="#3aa0e8" stroke-width=".9"/><path d="M6.579999999999998 11.65 C6.579999999999998 6.920000000000001 9.0 6.26 11.2 6.26 C13.399999999999999 6.26 15.82 6.920000000000001 15.82 11.65z" fill="url(#gRed)"/><path d="M9.44 6.370000000000001 L11.2 8.68 L12.959999999999999 6.370000000000001z" fill="#fff" opacity=".85"/><circle cx="11.2" cy="4.0600000000000005" r="2.4200000000000004" fill="#f6c9a4"/><path d="M8.67 3.84 C8.67 0.7599999999999999 13.729999999999999 0.7599999999999999 13.729999999999999 3.84 C12.52 2.3 9.879999999999999 2.3 8.67 3.84z" fill="#3a1a08"/><path d="M1.5 9.4 H12.0 L9.7 14.0 H4.3z" fill="#f2f2f2" stroke="#2a2a2a" stroke-width="1"/><path d="M11.5 9.8 L14.9 6.800000000000001" stroke="#2a2a2a" stroke-width="1.4"/><path d="M3.1 11.7 H10.9" stroke="#555" stroke-width="1.5" stroke-dasharray=".9 .9"/><circle cx="5.5" cy="15.2" r=".9" fill="#222"/><circle cx="8.9" cy="15.2" r=".9" fill="#222"/></svg>
<svg style="left:405px;top:60px" width="16" height="16" viewBox="0 0 16 16"><path d="M0.8 2.0 L2.3 0.5 H6.7 V4.9 L5.2 6.4 H0.8z" fill="#a00000"/><rect x="0.8" y="2.0" width="4.4" height="4.4" fill="#e01818"/><path d="M0.8 2.0 L2.3 0.5 H6.7 L5.2 2.0z" fill="#ff6a6a"/><path d="M5.8 6.2 L7.6 4.5 L9.8 6.7 L11.2 5.3 V11.0 H5.5 L7.0 9.5 L4.8 7.2z" fill="#62c83a" stroke="#1a6a14" stroke-width=".7"/><path d="M7.3999999999999995 6.6000000000000005 L10.0 9.2" stroke="#b8ec8a" stroke-width=".8"/><rect x="7.5" y="11.8" width="8" height="3.6" fill="#1a10a8"/><path d="M8.7 13.700000000000001 h6" stroke="#ffe680" stroke-width="1.2" stroke-dasharray="1.2 .9"/></svg>
<svg style="left:428px;top:60px" width="16" height="16" viewBox="0 0 16 16"><path d="M0.8 2.0 L2.3 0.5 H6.7 V4.9 L5.2 6.4 H0.8z" fill="#a00000"/><rect x="0.8" y="2.0" width="4.4" height="4.4" fill="#e01818"/><path d="M0.8 2.0 L2.3 0.5 H6.7 L5.2 2.0z" fill="#ff6a6a"/><path d="M5.8 6.2 L7.6 4.5 L9.8 6.7 L11.2 5.3 V11.0 H5.5 L7.0 9.5 L4.8 7.2z" fill="#62c83a" stroke="#1a6a14" stroke-width=".7"/><path d="M7.3999999999999995 6.6000000000000005 L10.0 9.2" stroke="#b8ec8a" stroke-width=".8"/><rect x="7.5" y="11.8" width="8" height="3.6" fill="#1a6af0"/><path d="M8.7 13.700000000000001 h6" stroke="#ffffff" stroke-width="1.2" stroke-dasharray="1.2 .9"/></svg>
<svg style="left:453px;top:60px" width="16" height="16" viewBox="0 0 16 16"><ellipse cx="4.2" cy="14.2" rx="2.48" ry="1.25" fill="url(#gGold)" stroke="#5a3e00" stroke-width=".7"/><path d="M2.72 13.899999999999999 h2.57" stroke="#fffbd0" stroke-width=".5"/><ellipse cx="4.2" cy="12.2" rx="2.48" ry="1.25" fill="url(#gGold)" stroke="#5a3e00" stroke-width=".7"/><path d="M2.72 11.899999999999999 h2.57" stroke="#fffbd0" stroke-width=".5"/><ellipse cx="4.2" cy="10.2" rx="2.48" ry="1.25" fill="url(#gGold)" stroke="#5a3e00" stroke-width=".7"/><path d="M2.72 9.899999999999999 h2.57" stroke="#fffbd0" stroke-width=".5"/><ellipse cx="4.2" cy="8.2" rx="2.48" ry="1.25" fill="url(#gGold)" stroke="#5a3e00" stroke-width=".7"/><path d="M2.72 7.8999999999999995 h2.57" stroke="#fffbd0" stroke-width=".5"/><ellipse cx="11.3" cy="14.6" rx="2.30" ry="1.25" fill="url(#gGold)" stroke="#5a3e00" stroke-width=".7"/><path d="M10.00 14.299999999999999 h2.20" stroke="#fffbd0" stroke-width=".5"/><ellipse cx="11.3" cy="12.6" rx="2.30" ry="1.25" fill="url(#gGold)" stroke="#5a3e00" stroke-width=".7"/><path d="M10.00 12.299999999999999 h2.20" stroke="#fffbd0" stroke-width=".5"/><path d="M4.5 4.6 C5.5 1 10.5 1 12 5" fill="none" stroke="#1d3f7a" stroke-width="1"/><path d="M10.3 4.2 L12.3 6.8 L13.9 3.6z" fill="#1d3f7a"/></svg>
<svg style="left:475px;top:60px" width="16" height="16" viewBox="0 0 16 16"><path d="M1.0 0.5 h7.0 l3 3 v8.5 h-10.0z" fill="#fcfdff" stroke="#a8b2bc" stroke-width="1"/><path d="M2.5 4h5.5M2.5 6h5.5M2.5 8h3" stroke="#c4ccd6" stroke-width=".8"/><path d="M4 15.4 L6 8.8 H15.4 V15.4z" fill="#f4fbf0" stroke="#2a9a2a" stroke-width="1.3"/><ellipse cx="10.6" cy="13.4" rx="2.30" ry="1.25" fill="url(#gGold)" stroke="#5a3e00" stroke-width=".7"/><path d="M9.30 13.1 h2.20" stroke="#fffbd0" stroke-width=".5"/><ellipse cx="10.6" cy="11.4" rx="2.30" ry="1.25" fill="url(#gGold)" stroke="#5a3e00" stroke-width=".7"/><path d="M9.30 11.1 h2.20" stroke="#fffbd0" stroke-width=".5"/></svg>
<svg style="left:497px;top:60px" width="16" height="16" viewBox="0 0 16 16"><rect x="0.5" y="0.5" width="8" height="3.6" fill="#1a10a8"/><path d="M1.7 2.4 h6" stroke="#fff" stroke-width="1.2" stroke-dasharray="1.2 .9"/><path d="M5.4 5.8 L7.2 4.1 L9.4 6.3 L10.8 4.8999999999999995 V10.6 H5.1000000000000005 L6.6 9.1 L4.4 6.8z" fill="#62c83a" stroke="#1a6a14" stroke-width=".7"/><path d="M7.0 6.2 L9.600000000000001 8.8" stroke="#b8ec8a" stroke-width=".8"/><rect x="6.5" y="12" width="9" height="3.6" fill="#f07820"/><path d="M7.8 13.9h6.5" stroke="#ffe0c0" stroke-width="1.1" stroke-dasharray="1.2 .9"/></svg>
<svg style="left:520px;top:60px" width="16" height="16" viewBox="0 0 16 16"><path d="M1.0 1.0 h8.5 l3 3 v9.5 h-11.5z" fill="#fcfdff" stroke="#3b86d6" stroke-width="1"/><path d="M2.5 5.5 h8" stroke="#3aa0e8" stroke-width=".9"/><path d="M2.5 7.7 h8" stroke="#3aa0e8" stroke-width=".9"/><path d="M2.5 9.9 h8" stroke="#3aa0e8" stroke-width=".9"/><path d="M8.5 6 C12 6 13.5 8 13.2 10.5" fill="none" stroke="#1d3f8a" stroke-width="1.1"/><path d="M11.6 9.6 L13.3 12.4 L15 9.5z" fill="#1d3f8a"/><ellipse cx="11.3" cy="15.0" rx="2.39" ry="1.25" fill="url(#gGold)" stroke="#5a3e00" stroke-width=".7"/><path d="M9.91 14.7 h2.38" stroke="#fffbd0" stroke-width=".5"/><ellipse cx="11.3" cy="13.0" rx="2.39" ry="1.25" fill="url(#gGold)" stroke="#5a3e00" stroke-width=".7"/><path d="M9.91 12.7 h2.38" stroke="#fffbd0" stroke-width=".5"/><ellipse cx="11.3" cy="11.0" rx="2.39" ry="1.25" fill="url(#gGold)" stroke="#5a3e00" stroke-width=".7"/><path d="M9.91 10.7 h2.38" stroke="#fffbd0" stroke-width=".5"/></svg>
<svg style="left:543px;top:60px" width="16" height="16" viewBox="0 0 16 16"><path d="M5.0 2.0 h8.0 l3 3 v9.5 h-11.0z" fill="#fcfdff" stroke="#3b86d6" stroke-width="1"/><path d="M6.5 6.5 h7.5" stroke="#3aa0e8" stroke-width=".9"/><path d="M6.5 8.7 h7.5" stroke="#3aa0e8" stroke-width=".9"/><path d="M6.5 10.9 h7.5" stroke="#3aa0e8" stroke-width=".9"/><ellipse cx="4.5" cy="7.5" rx="2.76" ry="1.25" fill="url(#gGold)" stroke="#5a3e00" stroke-width=".7"/><path d="M2.74 7.2 h3.12" stroke="#fffbd0" stroke-width=".5"/><ellipse cx="4.5" cy="5.5" rx="2.76" ry="1.25" fill="url(#gGold)" stroke="#5a3e00" stroke-width=".7"/><path d="M2.74 5.2 h3.12" stroke="#fffbd0" stroke-width=".5"/><ellipse cx="4.5" cy="3.5" rx="2.76" ry="1.25" fill="url(#gGold)" stroke="#5a3e00" stroke-width=".7"/><path d="M2.74 3.2 h3.12" stroke="#fffbd0" stroke-width=".5"/><path d="M7.5 11.5 C4.5 12.5 2.5 11 2.2 8.8" fill="none" stroke="#1d3f8a" stroke-width="1.1"/><path d="M.6 10 L2.2 7.4 L4 10z" fill="#1d3f8a"/></svg>
<svg style="left:566px;top:60px" width="16" height="16" viewBox="0 0 16 16"><path d="M6.5 15 L8.5 6 H15 V15z" fill="#c9c9c9" stroke="#8d8d8d" stroke-width=".7"/><ellipse cx="10.6" cy="14.3" rx="2.53" ry="1.25" fill="url(#gGold)" stroke="#5a3e00" stroke-width=".7"/><path d="M9.07 14.0 h2.66" stroke="#fffbd0" stroke-width=".5"/><ellipse cx="10.6" cy="12.3" rx="2.53" ry="1.25" fill="url(#gGold)" stroke="#5a3e00" stroke-width=".7"/><path d="M9.07 12.0 h2.66" stroke="#fffbd0" stroke-width=".5"/><ellipse cx="10.6" cy="10.3" rx="2.53" ry="1.25" fill="url(#gGold)" stroke="#5a3e00" stroke-width=".7"/><path d="M9.07 10.0 h2.66" stroke="#fffbd0" stroke-width=".5"/><ellipse cx="10.6" cy="8.3" rx="2.53" ry="1.25" fill="url(#gGold)" stroke="#5a3e00" stroke-width=".7"/><path d="M9.07 8.0 h2.66" stroke="#fffbd0" stroke-width=".5"/><path d="M4.2 0.5 V8.5 M0.2 4.5 H8.2" stroke="#1fae1f" stroke-width="2.4"/></svg>
<svg style="left:590px;top:60px" width="16" height="16" viewBox="0 0 16 16"><path d="M6.5 15 L8.5 6 H15 V15z" fill="#c9c9c9" stroke="#8d8d8d" stroke-width=".7"/><ellipse cx="10.6" cy="14.3" rx="2.53" ry="1.25" fill="url(#gGold)" stroke="#5a3e00" stroke-width=".7"/><path d="M9.07 14.0 h2.66" stroke="#fffbd0" stroke-width=".5"/><ellipse cx="10.6" cy="12.3" rx="2.53" ry="1.25" fill="url(#gGold)" stroke="#5a3e00" stroke-width=".7"/><path d="M9.07 12.0 h2.66" stroke="#fffbd0" stroke-width=".5"/><ellipse cx="10.6" cy="10.3" rx="2.53" ry="1.25" fill="url(#gGold)" stroke="#5a3e00" stroke-width=".7"/><path d="M9.07 10.0 h2.66" stroke="#fffbd0" stroke-width=".5"/><ellipse cx="10.6" cy="8.3" rx="2.53" ry="1.25" fill="url(#gGold)" stroke="#5a3e00" stroke-width=".7"/><path d="M9.07 8.0 h2.66" stroke="#fffbd0" stroke-width=".5"/><path d="M0.2 3.5 H9.5" stroke="#1fae1f" stroke-width="2.6"/></svg>
<svg style="left:613px;top:60px" width="16" height="16" viewBox="0 0 16 16"><path d="M2.0 0.5 h8.0 l3 3 v9.0 h-11.0z" fill="#fcfdff" stroke="#3b86d6" stroke-width="1"/><path d="M3.5 5.0 h7.5" stroke="#3aa0e8" stroke-width=".9"/><path d="M3.5 7.2 h7.5" stroke="#3aa0e8" stroke-width=".9"/><path d="M3.5 9.4 h7.5" stroke="#3aa0e8" stroke-width=".9"/><ellipse cx="4" cy="14.5" rx="2.76" ry="1.25" fill="url(#gGold)" stroke="#5a3e00" stroke-width=".7"/><path d="M2.24 14.2 h3.12" stroke="#fffbd0" stroke-width=".5"/><ellipse cx="4" cy="12.5" rx="2.76" ry="1.25" fill="url(#gGold)" stroke="#5a3e00" stroke-width=".7"/><path d="M2.24 12.2 h3.12" stroke="#fffbd0" stroke-width=".5"/><ellipse cx="4" cy="10.5" rx="2.76" ry="1.25" fill="url(#gGold)" stroke="#5a3e00" stroke-width=".7"/><path d="M2.24 10.2 h3.12" stroke="#fffbd0" stroke-width=".5"/><path d="M7.5 8.5 L10.2 11.2 L15.5 5.2" fill="none" stroke="#1fae1f" stroke-width="2.3"/></svg>
<svg style="left:636px;top:60px" width="16" height="16" viewBox="0 0 16 16"><path d="M1.0 0.5 h8.0 l3 3 v9.5 h-11.0z" fill="#fcfdff" stroke="#3b86d6" stroke-width="1"/><path d="M2.5 5.0 h7.5" stroke="#3aa0e8" stroke-width=".9"/><path d="M2.5 7.2 h7.5" stroke="#3aa0e8" stroke-width=".9"/><path d="M2.5 9.4 h7.5" stroke="#3aa0e8" stroke-width=".9"/><ellipse cx="5.5" cy="14.5" rx="2.85" ry="1.25" fill="url(#gGold)" stroke="#5a3e00" stroke-width=".7"/><path d="M3.65 14.2 h3.30" stroke="#fffbd0" stroke-width=".5"/><ellipse cx="5.5" cy="12.5" rx="2.85" ry="1.25" fill="url(#gGold)" stroke="#5a3e00" stroke-width=".7"/><path d="M3.65 12.2 h3.30" stroke="#fffbd0" stroke-width=".5"/><ellipse cx="5.5" cy="10.5" rx="2.85" ry="1.25" fill="url(#gGold)" stroke="#5a3e00" stroke-width=".7"/><path d="M3.65 10.2 h3.30" stroke="#fffbd0" stroke-width=".5"/><ellipse cx="5.5" cy="8.5" rx="2.85" ry="1.25" fill="url(#gGold)" stroke="#5a3e00" stroke-width=".7"/><path d="M3.65 8.2 h3.30" stroke="#fffbd0" stroke-width=".5"/><ellipse cx="12.2" cy="14.8" rx="2.53" ry="1.25" fill="url(#gGold)" stroke="#5a3e00" stroke-width=".7"/><path d="M10.67 14.5 h2.66" stroke="#fffbd0" stroke-width=".5"/><ellipse cx="12.2" cy="12.8" rx="2.53" ry="1.25" fill="url(#gGold)" stroke="#5a3e00" stroke-width=".7"/><path d="M10.67 12.5 h2.66" stroke="#fffbd0" stroke-width=".5"/></svg>
<svg style="left:659px;top:60px" width="16" height="16" viewBox="0 0 16 16"><path d="M1.0 0.5 h8.0 l3 3 v10.0 h-11.0z" fill="#fcfdff" stroke="#3b86d6" stroke-width="1"/><path d="M2.5 5.0 h7.5" stroke="#3aa0e8" stroke-width=".9"/><path d="M2.5 7.2 h7.5" stroke="#3aa0e8" stroke-width=".9"/><path d="M2.5 9.4 h7.5" stroke="#3aa0e8" stroke-width=".9"/><path d="M7.5 15 L15 7.5" stroke="#16a016" stroke-width="1.8"/><circle cx="8.3" cy="9" r="1.6" fill="#16a016"/><circle cx="14" cy="14" r="1.6" fill="#16a016"/></svg>
<svg style="left:682px;top:60px" width="16" height="16" viewBox="0 0 16 16"><path d="M1.0 0.5 h7.5 l3 3 v9.5 h-10.5z" fill="#fcfdff" stroke="#3b86d6" stroke-width="1"/><path d="M2.5 5.0 h7" stroke="#3aa0e8" stroke-width=".9"/><path d="M2.5 7.2 h7" stroke="#3aa0e8" stroke-width=".9"/><path d="M2.5 9.4 h7" stroke="#3aa0e8" stroke-width=".9"/><path d="M8.14 9.8 C8.14 6.36 9.9 5.88 11.5 5.88 C13.1 5.88 14.86 6.36 14.86 9.8z" fill="url(#gRed)"/><path d="M10.219999999999999 5.960000000000001 L11.5 7.640000000000001 L12.780000000000001 5.960000000000001z" fill="#fff" opacity=".85"/><circle cx="11.5" cy="4.28" r="1.7600000000000002" fill="#f6c9a4"/><path d="M9.66 4.12 C9.66 1.8800000000000001 13.34 1.8800000000000001 13.34 4.12 C12.46 3.0 10.54 3.0 9.66 4.12z" fill="#3a1a08"/><path d="M3.3 15.3 C3.3 11.0 5.5 10.399999999999999 7.5 10.399999999999999 C9.5 10.399999999999999 11.7 11.0 11.7 15.3z" fill="url(#gBlue)"/><path d="M5.9 10.5 L7.5 12.6 L9.1 10.5z" fill="#fff" opacity=".85"/><circle cx="7.5" cy="8.4" r="2.2" fill="#f6c9a4"/><path d="M5.2 8.2 C5.2 5.3999999999999995 9.8 5.3999999999999995 9.8 8.2 C8.7 6.8 6.3 6.8 5.2 8.2z" fill="#3a1a08"/></svg>
<svg style="left:705px;top:60px" width="16" height="16" viewBox="0 0 16 16"><rect x="1" y="0.5" width="13.5" height="15" rx="2" fill="url(#gGreen)" stroke="#157a22" stroke-width="1"/><path d="M5 3.5h3v2.5h-3z M8.5 7h3v2.5h-3z M8.5 11h3v2.5h-3z" fill="#0d5a18"/><path d="M6.5 6 V12.2 H8.5 M6.5 8.2 H8.5" fill="none" stroke="#0d5a18" stroke-width=".9"/></svg>
<svg style="left:728px;top:60px" width="16" height="16" viewBox="0 0 16 16"><rect x="1" y="1" width="13.5" height="14" fill="#f2f6fb" stroke="#9bb2cc" stroke-width="1"/><ellipse cx="7.8" cy="11.5" rx="3.45" ry="1.25" fill="url(#gGold)" stroke="#5a3e00" stroke-width=".7"/><path d="M5.35 11.2 h4.50" stroke="#fffbd0" stroke-width=".5"/><ellipse cx="7.8" cy="9.5" rx="3.45" ry="1.25" fill="url(#gGold)" stroke="#5a3e00" stroke-width=".7"/><path d="M5.35 9.2 h4.50" stroke="#fffbd0" stroke-width=".5"/><ellipse cx="7.8" cy="7.5" rx="3.45" ry="1.25" fill="url(#gGold)" stroke="#5a3e00" stroke-width=".7"/><path d="M5.35 7.2 h4.50" stroke="#fffbd0" stroke-width=".5"/></svg>
<svg style="left:750px;top:73px" width="7" height="4" viewBox="0 0 7 4"><path d="M0 0 H7 L3.5 4z" fill="#3a2a08"/></svg>
<div style="left:765px;top:60px;width:3px;height:1px;background:#c9bf9b;"></div>
<div style="left:765px;top:62px;width:3px;height:1px;background:#c9bf9b;"></div>
<div style="left:765px;top:64px;width:3px;height:1px;background:#c9bf9b;"></div>
<div style="left:765px;top:66px;width:3px;height:1px;background:#c9bf9b;"></div>
<div style="left:765px;top:68px;width:3px;height:1px;background:#c9bf9b;"></div>
<div style="left:765px;top:70px;width:3px;height:1px;background:#c9bf9b;"></div>
<div style="left:765px;top:72px;width:3px;height:1px;background:#c9bf9b;"></div>
<svg style="left:775px;top:60px" width="16" height="16" viewBox="0 0 16 16"><path d="M0.5 2 h8.5 l2.5 2.5 v9 h-11z" fill="#f4f4f4" stroke="#9a9a9a" stroke-width=".8"/><path d="M9 2 v2.5 h2.5" fill="#dcdcdc" stroke="#9a9a9a" stroke-width=".6"/><path d="M7.4 5.6 V4.9 H2.8 L5.2 7.8 L2.8 10.8 H7.4 V10" fill="none" stroke="#1c1c1c" stroke-width=".95"/><path d="M7.0200000000000005 8.75 C7.0200000000000005 4.880000000000001 9.0 4.34 10.8 4.34 C12.600000000000001 4.34 14.580000000000002 4.880000000000001 14.580000000000002 8.75z" fill="url(#gBlue)"/><path d="M9.360000000000001 4.430000000000001 L10.8 6.32 L12.24 4.430000000000001z" fill="#fff" opacity=".85"/><circle cx="10.8" cy="2.5400000000000005" r="1.9800000000000002" fill="#f6c9a4"/><path d="M8.73 2.3600000000000003 C8.73 -0.16000000000000003 12.870000000000001 -0.16000000000000003 12.870000000000001 2.3600000000000003 C11.88 1.1 9.72 1.1 8.73 2.3600000000000003z" fill="#3a1a08"/><path d="M8 10.7 L9.5 9.2 H14.5 V14.2 L13 15.7 H8z" fill="#a00000"/><rect x="8" y="10.7" width="5" height="5" fill="#e01818"/><path d="M8 10.7 L9.5 9.2 H14.5 L13 10.7z" fill="#ff6a6a"/></svg>
<svg style="left:798px;top:60px" width="16" height="16" viewBox="0 0 16 16"><path d="M0.5 2 h8.5 l2.5 2.5 v9 h-11z" fill="#f4f4f4" stroke="#9a9a9a" stroke-width=".8"/><path d="M9 2 v2.5 h2.5" fill="#dcdcdc" stroke="#9a9a9a" stroke-width=".6"/><path d="M7.4 5.6 V4.9 H2.8 L5.2 7.8 L2.8 10.8 H7.4 V10" fill="none" stroke="#1c1c1c" stroke-width=".95"/><path d="M7.0200000000000005 8.75 C7.0200000000000005 4.880000000000001 9.0 4.34 10.8 4.34 C12.600000000000001 4.34 14.580000000000002 4.880000000000001 14.580000000000002 8.75z" fill="url(#gRed)"/><path d="M9.360000000000001 4.430000000000001 L10.8 6.32 L12.24 4.430000000000001z" fill="#fff" opacity=".85"/><circle cx="10.8" cy="2.5400000000000005" r="1.9800000000000002" fill="#f6c9a4"/><path d="M8.73 2.3600000000000003 C8.73 -0.16000000000000003 12.870000000000001 -0.16000000000000003 12.870000000000001 2.3600000000000003 C11.88 1.1 9.72 1.1 8.73 2.3600000000000003z" fill="#3a1a08"/><path d="M8.5 10.7 L10.0 9.2 H15.0 V14.2 L13.5 15.7 H8.5z" fill="#0a1088"/><rect x="8.5" y="10.7" width="5" height="5" fill="#1a2ad8"/><path d="M8.5 10.7 L10.0 9.2 H15.0 L13.5 10.7z" fill="#6a7cff"/></svg>
<svg style="left:821px;top:60px" width="16" height="16" viewBox="0 0 16 16"><path d="M0.5 2 h8.5 l2.5 2.5 v9 h-11z" fill="#f4f4f4" stroke="#9a9a9a" stroke-width=".8"/><path d="M9 2 v2.5 h2.5" fill="#dcdcdc" stroke="#9a9a9a" stroke-width=".6"/><path d="M7.4 5.6 V4.9 H2.8 L5.2 7.8 L2.8 10.8 H7.4 V10" fill="none" stroke="#1c1c1c" stroke-width=".95"/><path d="M8.64 9.100000000000001 C8.64 5.66 10.4 5.18 12 5.18 C13.6 5.18 15.36 5.66 15.36 9.100000000000001z" fill="url(#gBlue)"/><path d="M10.719999999999999 5.26 L12 6.94 L13.280000000000001 5.26z" fill="#fff" opacity=".85"/><circle cx="12" cy="3.58" r="1.7600000000000002" fill="#f6c9a4"/><path d="M10.16 3.42 C10.16 1.18 13.84 1.18 13.84 3.42 C12.96 2.3 11.04 2.3 10.16 3.42z" fill="#3a1a08"/><path d="M3.999999999999999 15.5 C3.999999999999999 11.2 6.199999999999999 10.6 8.2 10.6 C10.2 10.6 12.399999999999999 11.2 12.399999999999999 15.5z" fill="url(#gRed)"/><path d="M6.6 10.7 L8.2 12.8 L9.799999999999999 10.7z" fill="#fff" opacity=".85"/><circle cx="8.2" cy="8.6" r="2.2" fill="#f6c9a4"/><path d="M5.8999999999999995 8.4 C5.8999999999999995 5.6 10.5 5.6 10.5 8.4 C9.399999999999999 7.0 6.999999999999999 7.0 5.8999999999999995 8.4z" fill="#3a1a08"/></svg>
<svg style="left:844px;top:60px" width="16" height="16" viewBox="0 0 16 16"><path d="M0.5 2 h8.5 l2.5 2.5 v9 h-11z" fill="#f4f4f4" stroke="#9a9a9a" stroke-width=".8"/><path d="M9 2 v2.5 h2.5" fill="#dcdcdc" stroke="#9a9a9a" stroke-width=".6"/><path d="M7.4 5.6 V4.9 H2.8 L5.2 7.8 L2.8 10.8 H7.4 V10" fill="none" stroke="#1c1c1c" stroke-width=".95"/><path d="M9.5 3.0 L11.0 1.5 H16.0 V6.5 L14.5 8.0 H9.5z" fill="#a00000"/><rect x="9.5" y="3.0" width="5" height="5" fill="#e01818"/><path d="M9.5 3.0 L11.0 1.5 H16.0 L14.5 3.0z" fill="#ff6a6a"/><rect x="6.5" y="11.8" width="8" height="3.6" fill="#1a10a8"/><path d="M7.7 13.700000000000001 h6" stroke="#fff" stroke-width="1.2" stroke-dasharray="1.2 .9"/></svg>
<svg style="left:867px;top:60px" width="16" height="16" viewBox="0 0 16 16"><path d="M0.5 2 h8.5 l2.5 2.5 v9 h-11z" fill="#f4f4f4" stroke="#9a9a9a" stroke-width=".8"/><path d="M9 2 v2.5 h2.5" fill="#dcdcdc" stroke="#9a9a9a" stroke-width=".6"/><path d="M7.4 5.6 V4.9 H2.8 L5.2 7.8 L2.8 10.8 H7.4 V10" fill="none" stroke="#1c1c1c" stroke-width=".95"/><path d="M9.5 3.0 L11.0 1.5 H16.0 V6.5 L14.5 8.0 H9.5z" fill="#a00000"/><rect x="9.5" y="3.0" width="5" height="5" fill="#e01818"/><path d="M9.5 3.0 L11.0 1.5 H16.0 L14.5 3.0z" fill="#ff6a6a"/><rect x="8" y="11.5" width="5.5" height="4" fill="#f0a020" stroke="#7a4a00" stroke-width=".7"/><rect x="9.3" y="12.8" width="3" height="1.4" fill="#3a2a00"/></svg>
<svg style="left:890px;top:60px" width="16" height="16" viewBox="0 0 16 16"><path d="M0.5 2 h8.5 l2.5 2.5 v9 h-11z" fill="#f4f4f4" stroke="#9a9a9a" stroke-width=".8"/><path d="M9 2 v2.5 h2.5" fill="#dcdcdc" stroke="#9a9a9a" stroke-width=".6"/><path d="M7.4 5.6 V4.9 H2.8 L5.2 7.8 L2.8 10.8 H7.4 V10" fill="none" stroke="#1c1c1c" stroke-width=".95"/><path d="M9.5 3.0 L11.0 1.5 H16.0 V6.5 L14.5 8.0 H9.5z" fill="#a00000"/><rect x="9.5" y="3.0" width="5" height="5" fill="#e01818"/><path d="M9.5 3.0 L11.0 1.5 H16.0 L14.5 3.0z" fill="#ff6a6a"/><rect x="7.5" y="11.8" width="8" height="3.6" fill="#1a6af0"/><path d="M8.7 13.700000000000001 h6" stroke="#d8ecff" stroke-width="1.2" stroke-dasharray="1.2 .9"/></svg>
<svg style="left:913px;top:60px" width="16" height="16" viewBox="0 0 16 16"><path d="M0.5 2 h8.5 l2.5 2.5 v9 h-11z" fill="#f4f4f4" stroke="#9a9a9a" stroke-width=".8"/><path d="M9 2 v2.5 h2.5" fill="#dcdcdc" stroke="#9a9a9a" stroke-width=".6"/><path d="M7.4 5.6 V4.9 H2.8 L5.2 7.8 L2.8 10.8 H7.4 V10" fill="none" stroke="#1c1c1c" stroke-width=".95"/><rect x="8.5" y="4.5" width="6.5" height="11" fill="#cfcfcf" stroke="#555" stroke-width=".8"/><path d="M9.8 7h4M9.8 9h4M9.8 11h4M9.8 13h4" stroke="#444" stroke-width=".8"/></svg>
<svg style="left:936px;top:60px" width="16" height="16" viewBox="0 0 16 16"><path d="M0.5 2 h8.5 l2.5 2.5 v9 h-11z" fill="#f4f4f4" stroke="#9a9a9a" stroke-width=".8"/><path d="M9 2 v2.5 h2.5" fill="#dcdcdc" stroke="#9a9a9a" stroke-width=".6"/><path d="M7.4 5.6 V4.9 H2.8 L5.2 7.8 L2.8 10.8 H7.4 V10" fill="none" stroke="#1c1c1c" stroke-width=".95"/><path d="M7.2 8.5 L10 11.4 L15.6 5.5" fill="none" stroke="#14a81a" stroke-width="2.4"/></svg>
<svg style="left:958px;top:73px" width="7" height="4" viewBox="0 0 7 4"><path d="M0 0 H7 L3.5 4z" fill="#3a2a08"/></svg>
<div style="left:0px;top:81px;width:1294px;height:1px;background:#d4d0c8;"></div>
<div style="left:0px;top:82px;width:1294px;height:20px;background:#b1b1b1;border-top:1px solid #6a6a6a;border-bottom:1px solid #707070;"></div>
<span id="t16" class="t b" style="right:854px;top:95.6px;color:#5b5b5b;font-size:12px;letter-spacing:0.07px;">Стоимостная оценка склада в ценах номенклатуры. Настройка: Основная</span>
<div style="left:1279px;top:95px;width:8px;height:2px;background:#5e5e5e;"></div>
<div style="left:0px;top:102px;width:1294px;height:25px;background:#ece7dc;border-bottom:1px solid #bdb28f;"></div>
<span id="t17" class="t br" style="right:1269px;top:118.6px;">Действия</span>
<svg style="left:29px;top:113px" width="6" height="3" viewBox="0 0 6 3"><path d="M0 0 H6 L3 3z" fill="#5a3c00"/></svg>
<div style="left:40px;top:105px;width:1px;height:19px;background:linear-gradient(#e4dcc4,#b9ac84 30%,#b9ac84 70%,#e4dcc4);"></div>
<div style="left:41px;top:105px;width:1px;height:19px;background:linear-gradient(#f3efe2,#fbf8ee 30%,#fbf8ee 70%,#f3efe2);"></div>
<svg style="left:51px;top:108px" width="7" height="12" viewBox="0 0 7 12"><path d="M0 0 L6.5 6 L0 12z" fill="#168a16"/></svg>
<span id="t18" class="t b br" style="left:64px;top:118.6px;font-size:11.5px;letter-spacing:0.033px;">Сформировать</span>
<div style="left:159px;top:105px;width:1px;height:19px;background:linear-gradient(#e4dcc4,#b9ac84 30%,#b9ac84 70%,#e4dcc4);"></div>
<div style="left:160px;top:105px;width:1px;height:19px;background:linear-gradient(#f3efe2,#fbf8ee 30%,#fbf8ee 70%,#f3efe2);"></div>
<span id="t19" class="t br" style="left:166px;top:118.6px;letter-spacing:0.056px;">Настройка...</span>
<div style="left:237px;top:105px;width:1px;height:19px;background:linear-gradient(#e4dcc4,#b9ac84 30%,#b9ac84 70%,#e4dcc4);"></div>
<div style="left:238px;top:105px;width:1px;height:19px;background:linear-gradient(#f3efe2,#fbf8ee 30%,#fbf8ee 70%,#f3efe2);"></div>
<svg style="left:244px;top:106px" width="16" height="16" viewBox="0 0 16 16"><path d="M1.5 1 h7.5 l3.3 3.3 v10.4 h-10.8z" fill="url(#gPage)" stroke="#7fa6d4" stroke-width=".9"/><path d="M9 1 v3.3 h3.3" fill="#e4eefa" stroke="#7fa6d4" stroke-width=".7"/><rect x="3.4" y="4.6" width="1.5" height="6.6" fill="#d8342c"/><rect x="5.2" y="7" width="1.4" height="4.2" fill="#e0584c"/><rect x="7.2" y="5.8" width="1.8" height="5.4" fill="#2c9c34"/><path d="M3 11.6h7.4M3 13.2h7.4" stroke="#9fb4cc" stroke-width=".7"/></svg>
<div style="left:264px;top:105px;width:1px;height:19px;background:linear-gradient(#e4dcc4,#b9ac84 30%,#b9ac84 70%,#e4dcc4);"></div>
<div style="left:265px;top:105px;width:1px;height:19px;background:linear-gradient(#f3efe2,#fbf8ee 30%,#fbf8ee 70%,#f3efe2);"></div>
<svg style="left:271px;top:106px" width="16" height="16" viewBox="0 0 16 16"><path d="M0.5 0.8 H11 L7 5.6 V11.2 L4.6 9.8 V5.6z" fill="#c4c4c4" stroke="#6e6e6e" stroke-width=".9"/><rect x="7.6" y="4.4" width="8" height="2" fill="#dca066"/><rect x="7.6" y="7.1" width="8" height="2" fill="#2b93dc"/><rect x="7.6" y="9.8" width="8" height="2" fill="#2b93dc"/><rect x="7.6" y="12.5" width="8" height="2" fill="#dca066"/></svg>
<div style="left:291px;top:103px;width:22px;height:22px;background:#f8f4e3;border:1px solid #b5aa86;"></div>
<svg style="left:294px;top:106px" width="16" height="16" viewBox="0 0 16 16"><rect x="0.5" y="1.5" width="15" height="13" fill="#fdfdfd" stroke="#6e6e6e" stroke-width=".9"/><rect x="2" y="2.8" width="12" height="2" fill="#1c1c9c"/><path d="M0.5 6h15" stroke="#111" stroke-width="1"/><path d="M0.5 8.8h15M0.5 11.6h15M5.5 6.4v8M10.5 6.4v8" stroke="#9c9c9c" stroke-width=".7"/></svg>
<div style="left:316px;top:105px;width:1px;height:19px;background:linear-gradient(#e4dcc4,#b9ac84 30%,#b9ac84 70%,#e4dcc4);"></div>
<div style="left:317px;top:105px;width:1px;height:19px;background:linear-gradient(#f3efe2,#fbf8ee 30%,#fbf8ee 70%,#f3efe2);"></div>
<svg style="left:322px;top:106px" width="16" height="16" viewBox="0 0 16 16"><path d="M5.5 0.5 h6.5 l2.5 2.5 v9 h-9z" fill="#f4f7fb" stroke="#9fb0c4" stroke-width=".8"/><path d="M7 3.6h5.5M7 5.6h5.5M7 7.6h5.5" stroke="#9fb2c8" stroke-width=".8"/><path d="M0.5 8.5 L4 12 L5.3 10.7 L8 13.4 V7 H1.8z" fill="#22a022" stroke="#0a6a0a" stroke-width=".5"/><path d="M4.5 15.5 L9.5 10.5 L14.5 15.5z" fill="#f4cf2a" stroke="#c8a000" stroke-width=".5"/></svg>
<svg style="left:345px;top:106px" width="16" height="16" viewBox="0 0 16 16"><path d="M3.5 0.5 h6.5 l2.5 2.5 v9 h-9z" fill="#f4f7fb" stroke="#9fb0c4" stroke-width=".8"/><path d="M5 3.6h5.5M5 5.6h5.5M5 7.6h5.5" stroke="#9fb2c8" stroke-width=".8"/><path d="M15.5 4 L12.6 7 L11 5.5 L8.5 8 V13 H13.8 L12.2 11.4 L15.5 8.2z" fill="#22a022" stroke="#0a6a0a" stroke-width=".5"/><path d="M0.5 15.5 L5.5 10.5 L10.5 15.5z" fill="#f4cf2a" stroke="#c8a000" stroke-width=".5"/></svg>
<div style="left:367px;top:105px;width:1px;height:19px;background:linear-gradient(#e4dcc4,#b9ac84 30%,#b9ac84 70%,#e4dcc4);"></div>
<div style="left:368px;top:105px;width:1px;height:19px;background:linear-gradient(#f3efe2,#fbf8ee 30%,#fbf8ee 70%,#f3efe2);"></div>
<svg style="left:373px;top:106px" width="16" height="16" viewBox="0 0 16 16"><defs><radialGradient id="gHelp" cx=".4" cy=".3" r=".8"><stop offset="0" stop-color="#ffedc9"/><stop offset=".6" stop-color="#f3bb5c"/><stop offset="1" stop-color="#c98a2c"/></radialGradient></defs><circle cx="8" cy="8" r="7.6" fill="url(#gHelp)" stroke="#c49a58" stroke-width=".7"/><text x="8.2" y="12.4" text-anchor="middle" font-family="Liberation Sans,sans-serif" font-size="12.5" fill="#8a5826" stroke="#8a5826" stroke-width=".3">?</text></svg>
<span id="t20" class="t br" style="left:1188px;top:118.6px;">На дату:</span>
<div style="left:1245px;top:105px;width:60px;height:19px;background:#fff;border:1px solid #b5aa86;"></div>
<span id="t21" class="t " style="left:1248px;top:118.8px;letter-spacing:-0.206px;">27.06.2018</span>
<div style="left:0px;top:127px;width:1294px;height:40px;background:#fffbf0;border-bottom:1px solid #c9be9a;"></div>
<span id="t22" class="t br" style="right:1272px;top:149px;">Тип цен:</span>
<div style="left:32px;top:135px;width:762px;height:19px;background:#fff;border:1px solid #b5aa86;"></div>
<div style="left:751px;top:136px;width:14px;height:17px;background:#ece7dc;border-left:1px solid #b5aa86;"></div>
<div style="left:765px;top:136px;width:14px;height:17px;background:#ece7dc;border-left:1px solid #b5aa86;"></div>
<div style="left:779px;top:136px;width:14px;height:17px;background:#ece7dc;border-left:1px solid #b5aa86;"></div>
<span id="t23" class="t b" style="left:754.2px;top:148px;color:#000;">...</span>
<svg style="left:768.8px;top:141.8px" width="7.2" height="6.4" viewBox="0 0 7.2 6.4"><path d="M0.8 0.6 L6.4 5.8 M6.4 0.6 L0.8 5.8" stroke="#000" stroke-width="1.7"/></svg>
<svg style="left:782px;top:139.6px" width="10" height="10" viewBox="0 0 10 10"><circle cx="3.5" cy="3.6" r="2.7" fill="none" stroke="#000" stroke-width="1.2"/><path d="M5.6 5.7 L8.3 8.4" stroke="#000" stroke-width="1.9" stroke-linecap="round"/></svg>
<span id="t24" class="t br" style="left:894px;top:149px;letter-spacing:0.336px;">Режим:</span>
<svg style="left:939px;top:138px" width="13" height="13" viewBox="0 0 13 13"><circle cx="6.5" cy="6.5" r="5.9" fill="#fff" stroke="#a09a78" stroke-width="1.1"/></svg>
<span id="t25" class="t br" style="left:954px;top:149px;letter-spacing:0.021px;">Оперативный (остатки)</span>
<svg style="left:1082px;top:138px" width="13" height="13" viewBox="0 0 13 13"><circle cx="6.5" cy="6.5" r="5.9" fill="#fff" stroke="#a09a78" stroke-width="1.1"/><circle cx="6.5" cy="6.5" r="2.5" fill="#444"/></svg>
<span id="t26" class="t br" style="left:1097px;top:149px;letter-spacing:-0.022px;">Неоперативный (остатки и себестоимость)</span>
<div style="left:0px;top:167px;width:9px;height:474px;background:#fffbf0;border-right:1px solid #b5aa86;"></div>
<div style="left:0px;top:349px;width:19px;height:1px;background:#b5aa86;"></div>
<span id="t27" class="t title" style="left:27px;top:184px;letter-spacing:0.034px;">Стоимостная оценка склада в ценах номенклатуры</span>
<span id="t28" class="t ar" style="left:25px;top:199px;font-size:11px;letter-spacing:-0.100px;">Период: на конец дня 27.06.2018</span>
<span id="t29" class="t ar" style="right:91.5px;top:214px;">Параметры: Количество (в ед. хранения, в базовых ед.); Себестоимость (Рубль); В выбранном типе цен (Рубль)(Цена, Стоимость, Наценка, Рентабельность (%));</span>
<div style="left:700px;top:305px;width:594px;height:44px;background:#ece7dc;border-top:1px solid #b6ab86;"></div>
<div style="left:700px;top:320px;width:302px;height:1px;background:#b6ab86;"></div>
<div style="left:1107px;top:320px;width:187px;height:1px;background:#b6ab86;"></div>
<div style="left:700px;top:349px;width:594px;height:1px;background:#b6ab86;"></div>
<div style="left:792px;top:305px;width:1px;height:44px;background:#b6ab86;"></div>
<div style="left:897px;top:320px;width:1px;height:29px;background:#b6ab86;"></div>
<div style="left:1002px;top:305px;width:1px;height:44px;background:#b6ab86;"></div>
<div style="left:1107px;top:305px;width:1px;height:44px;background:#b6ab86;"></div>
<div style="left:1212px;top:320px;width:1px;height:29px;background:#b6ab86;"></div>
<span class="t rh" style="left:747px;width:300px;text-align:center;top:317px;">Количество неотфактурованных</span>
<span class="t rh" style="left:904px;width:300px;text-align:center;top:317px;">Себестоимость</span>
<span class="t rh" style="left:904px;width:300px;text-align:center;top:332px;">(Рубль)</span>
<span id="t30" class="t rh" style="left:1231px;top:317px;">В выбранном типе цен (Рубль)</span>
<span id="t31" class="t rh" style="right:515.5px;top:332px;">в базовых ед.</span>
<span class="t rh" style="left:695px;width:300px;text-align:center;top:332px;">в ед. хранения</span>
<span class="t rh" style="left:799px;width:300px;text-align:center;top:332px;">в базовых ед.</span>
<span class="t rh" style="left:1009.5px;width:300px;text-align:center;top:332px;">Цена</span>
<span id="t32" class="t rh" style="left:1235px;top:332px;">Стоимость</span>
<span id="t33" class="t ar" style="right:504px;top:361px;">10,000</span>
<span id="t34" class="t ar" style="right:189px;top:361px;word-spacing:1px;">10 806,44</span>
<div style="left:700px;top:364px;width:594px;height:1px;background:#b6ab86;"></div>
<span id="t35" class="t ar" style="right:504px;top:376px;">17,000</span>
<span id="t36" class="t ar" style="right:189px;top:376px;word-spacing:1px;">18 416,48</span>
<div style="left:700px;top:379px;width:594px;height:1px;background:#b6ab86;"></div>
<span id="t37" class="t ar" style="right:504px;top:391px;">22,000</span>
<span id="t38" class="t ar" style="right:189px;top:391px;word-spacing:1px;">12 046,48</span>
<div style="left:700px;top:394px;width:594px;height:1px;background:#b6ab86;"></div>
<span id="t39" class="t ar" style="right:504px;top:406px;">3,000</span>
<span id="t40" class="t ar" style="right:189px;top:406px;word-spacing:1px;">16 411,74</span>
<div style="left:700px;top:409px;width:594px;height:1px;background:#b6ab86;"></div>
<span id="t41" class="t ar" style="right:504px;top:421px;">5,000</span>
<span id="t42" class="t ar" style="right:189px;top:421px;word-spacing:1px;">20 000,00</span>
<div style="left:700px;top:438px;width:594px;height:1px;background:#b6ab86;"></div>
<span id="t43" class="t ar" style="right:504px;top:450px;">1,000</span>
<span id="t44" class="t ar" style="right:189px;top:450px;word-spacing:1px;">374 104,11</span>
<div style="left:700px;top:453px;width:594px;height:1px;background:#b6ab86;"></div>
<span id="t45" class="t ar" style="right:504px;top:465px;">2,000</span>
<span id="t46" class="t ar" style="right:189px;top:465px;word-spacing:1px;">4 610,36</span>
<div style="left:700px;top:468px;width:594px;height:1px;background:#b6ab86;"></div>
<span id="t47" class="t ar" style="right:504px;top:480px;">21,000</span>
<span id="t48" class="t ar" style="right:189px;top:480px;word-spacing:1px;">4 539,78</span>
<div style="left:700px;top:483px;width:594px;height:1px;background:#b6ab86;"></div>
<span id="t49" class="t ar" style="right:504px;top:495px;">1,000</span>
<span id="t50" class="t ar" style="right:189px;top:495px;word-spacing:1px;">489,78</span>
<div style="left:700px;top:498px;width:594px;height:1px;background:#b6ab86;"></div>
<span id="t51" class="t ar" style="right:504px;top:510px;">17,000</span>
<span id="t52" class="t ar" style="right:189px;top:510px;word-spacing:1px;">22 410,11</span>
<div style="left:700px;top:513px;width:594px;height:1px;background:#b6ab86;"></div>
<span id="t53" class="t ar" style="right:504px;top:525px;">15,000</span>
<span id="t54" class="t ar" style="right:189px;top:525px;word-spacing:1px;">21 394,05</span>
<div style="left:700px;top:528px;width:594px;height:1px;background:#b6ab86;"></div>
<span id="t55" class="t ar" style="right:504px;top:540px;">54,000</span>
<span id="t56" class="t ar" style="right:189px;top:540px;word-spacing:1px;">4 267,71</span>
<div style="left:700px;top:543px;width:594px;height:1px;background:#b6ab86;"></div>
<span id="t57" class="t ar" style="right:504px;top:555px;">3,000</span>
<span id="t58" class="t ar" style="right:189px;top:555px;word-spacing:1px;">337,38</span>
<div style="left:700px;top:558px;width:594px;height:1px;background:#b6ab86;"></div>
<span id="t59" class="t ar" style="right:504px;top:570px;">11,000</span>
<span id="t60" class="t ar" style="right:189px;top:570px;word-spacing:1px;">16 051,86</span>
<div style="left:700px;top:573px;width:594px;height:1px;background:#b6ab86;"></div>
<span id="t61" class="t ar" style="right:504px;top:585px;">11,000</span>
<span id="t62" class="t ar" style="right:189px;top:585px;word-spacing:1px;">3 836,42</span>
<div style="left:700px;top:588px;width:594px;height:1px;background:#b6ab86;"></div>
<span id="t63" class="t ar" style="right:504px;top:600px;">16,000</span>
<span id="t64" class="t ar" style="right:189px;top:600px;word-spacing:1px;">7 888,84</span>
<div style="left:700px;top:603px;width:594px;height:1px;background:#b6ab86;"></div>
<span id="t65" class="t ar" style="right:504px;top:615px;">14,000</span>
<span id="t66" class="t ar" style="right:189px;top:615px;word-spacing:1px;">20 752,84</span>
<div style="left:700px;top:618px;width:594px;height:1px;background:#b6ab86;"></div>
<span id="t67" class="t ar" style="right:504px;top:630px;">5,000</span>
<span id="t68" class="t ar" style="right:189px;top:630px;word-spacing:1px;">7 369,64</span>
<div style="left:700px;top:633px;width:594px;height:1px;background:#b6ab86;"></div>
<span id="t69" class="t ar" style="right:504px;top:645px;">48,000</span>
<span id="t70" class="t ar" style="right:189px;top:645px;word-spacing:1px;">119 380,18</span>
<div style="left:700px;top:648px;width:594px;height:1px;background:#b6ab86;"></div>
<div style="left:792px;top:349px;width:1px;height:300px;background:#b6ab86;"></div>
<div style="left:897px;top:349px;width:1px;height:300px;background:#b6ab86;"></div>
<div style="left:1002px;top:349px;width:1px;height:300px;background:#b6ab86;"></div>
<div style="left:1107px;top:349px;width:1px;height:300px;background:#b6ab86;"></div>
<div style="left:1212px;top:349px;width:1px;height:300px;background:#b6ab86;"></div>
<div style="left:19px;top:198px;width:707px;height:443px;background:#cbcbcb;border-right:1px solid #a2a2a2;"></div>
<div style="left:22px;top:219px;width:700px;height:422px;background:#fffbf0;"></div>
<svg style="left:24.5px;top:201px" width="12" height="15" viewBox="0 0 12 15"><path d="M0.5 0.5 h7.5 l3.5 3.5 v10.5 h-11z" fill="#fdfdfd" stroke="#7a9cc6" stroke-width=".9"/><path d="M8 0.5 v3.5 h3.5" fill="#dfe8f4" stroke="#7a9cc6" stroke-width=".7"/><rect x="2.3" y="5" width="1.8" height="6.8" fill="#d02020"/><rect x="4.6" y="7" width="1.8" height="4.8" fill="#20a020"/><rect x="6.9" y="6.2" width="1.8" height="5.6" fill="#d08020"/><path d="M1.8 12.6h8" stroke="#3050c0" stroke-width=".9"/></svg>
<span id="t71" class="t b" style="left:43px;top:214px;color:#303030;font-size:12px;letter-spacing:0.076px;">Настройки</span>
<svg style="left:686px;top:204px" width="11" height="11" viewBox="0 0 11 11"><rect x="0.75" y="1.25" width="9.5" height="9" fill="none" stroke="#333" stroke-width="1.3"/><rect x="0.1" y="0.3" width="10.8" height="1.8" fill="#333"/></svg>
<svg style="left:708px;top:205px" width="9" height="9" viewBox="0 0 9 9"><path d="M0.8 0.8 L8.2 8.2 M8.2 0.8 L0.8 8.2" stroke="#333" stroke-width="2.1"/></svg>
<span id="t72" class="t br" style="left:30px;top:241px;letter-spacing:-0.143px;">На дату:</span>
<div style="left:87px;top:227px;width:80px;height:19px;background:#fff;border:1px solid #b5aa86;"></div>
<span id="t73" class="t " style="left:90px;top:241px;letter-spacing:-0.056px;">27.06.2018</span>
<div style="left:152px;top:228px;width:14px;height:17px;background:#f3eedb;border-left:1px solid #b5aa86;"></div>
<svg style="left:155px;top:232px" width="9" height="9" viewBox="0 0 9 9"><rect x="0.5" y="0.5" width="8" height="8" fill="#fff" stroke="#111" stroke-width="1"/><rect x="0" y="0" width="9" height="2.2" fill="#111"/><path d="M3.05 2v7M5.95 2v7M0 4.5h9M0 6.7h9" stroke="#222" stroke-width=".55"/></svg>
<span id="t74" class="t hd" style="left:30px;top:264px;">Параметры</span>
<div style="left:30px;top:267px;width:684px;height:1px;background:#c2b890;"></div>
<div style="left:30.5px;top:278px;width:12px;height:12px;background:#fff;border:1px solid #8c8672;border-radius:3px;"><svg style="left:0.5px;top:0.5px" width="10" height="10" viewBox="0 0 10 10"><path d="M1.6 4.4 L4.1 7.2 L8.4 2" fill="none" stroke="#141414" stroke-width="1.8"/></svg></div>
<span id="t75" class="t br" style="left:45px;top:288px;letter-spacing:0.080px;">Отрицательное красным</span>
<div style="left:180.5px;top:278px;width:12px;height:12px;background:#fff;border:1px solid #8c8672;border-radius:3px;"><svg style="left:0.5px;top:0.5px" width="10" height="10" viewBox="0 0 10 10"><path d="M1.6 4.4 L4.1 7.2 L8.4 2" fill="none" stroke="#141414" stroke-width="1.8"/></svg></div>
<span id="t76" class="t br" style="left:195px;top:288px;">Выводить общие итоги</span>
<div style="left:320.5px;top:278px;width:12px;height:12px;background:#fff;border:1px solid #8c8672;border-radius:3px;"></div>
<span id="t77" class="t br" style="left:335px;top:288px;">Выводить детальные записи</span>
<div style="left:489.5px;top:278px;width:12px;height:12px;background:#fff;border:1px solid #8c8672;border-radius:3px;"></div>
<span id="t78" class="t br" style="left:504px;top:288px;letter-spacing:0.175px;">Использовать свойства и категории</span>
<span id="t79" class="t hd" style="left:30px;top:311px;letter-spacing:0.319px;">Показатели</span>
<div style="left:30px;top:314px;width:332px;height:1px;background:#c2b890;"></div>
<span id="t80" class="t hd" style="left:382px;top:311px;letter-spacing:0.056px;">Группировки строк</span>
<div style="left:382px;top:314px;width:332px;height:1px;background:#c2b890;"></div>
<svg style="left:35px;top:320px" width="15" height="15" viewBox="0 0 15 15"><defs><linearGradient id="gSq" x1="0" y1="0" x2="0" y2="1"><stop offset="0" stop-color="#c2d4e6"/><stop offset="1" stop-color="#fbfdff"/></linearGradient></defs><rect x="5.2" y="0.6" width="9.6" height="9.6" rx=".9" fill="#dfe9f3" stroke="#4c7cab" stroke-width=".9"/><rect x="3.2" y="2.6" width="9.6" height="9.6" rx=".9" fill="#e6eef6" stroke="#4c7cab" stroke-width=".9"/><rect x="1" y="4.7" width="10" height="10" rx=".9" fill="#fbfdff" stroke="#41709e" stroke-width="1"/><rect x="2" y="5.6" width="8" height="3" fill="#cfdcea"/><path d="M2.8 9.4 L5.2 12 L9.8 6.6" fill="none" stroke="#1f7a12" stroke-width="2.9"/><path d="M2.8 9.4 L5.2 12 L9.8 6.6" fill="none" stroke="#48c032" stroke-width="1.7"/></svg>
<svg style="left:58px;top:320px" width="15" height="15" viewBox="0 0 15 15"><defs><linearGradient id="gSq" x1="0" y1="0" x2="0" y2="1"><stop offset="0" stop-color="#c2d4e6"/><stop offset="1" stop-color="#fbfdff"/></linearGradient></defs><rect x="5.2" y="0.6" width="9.6" height="9.6" rx=".9" fill="#dfe9f3" stroke="#4c7cab" stroke-width=".9"/><rect x="3.2" y="2.6" width="9.6" height="9.6" rx=".9" fill="#e6eef6" stroke="#4c7cab" stroke-width=".9"/><rect x="1" y="4.7" width="10" height="10" rx=".9" fill="url(#gSq)" stroke="#41709e" stroke-width="1"/></svg>
<div style="left:78px;top:319px;width:1px;height:17px;background:linear-gradient(#e4dcc4,#b9ac84 30%,#b9ac84 70%,#e4dcc4);"></div>
<div style="left:79px;top:319px;width:1px;height:17px;background:linear-gradient(#f3efe2,#fbf8ee 30%,#fbf8ee 70%,#f3efe2);"></div>
<svg style="left:86px;top:321px" width="14" height="14" viewBox="0 0 14 14"><defs><linearGradient id="gAu" x1="0" y1="0" x2="0" y2="1"><stop offset="0" stop-color="#dceefc"/><stop offset=".55" stop-color="#7fbaec"/><stop offset="1" stop-color="#4a94dc"/></linearGradient></defs><path d="M7 0.8 L13.4 7.4 H10 V12.6 H4 V7.4 H0.6z" fill="url(#gAu)" stroke="#3f82c8" stroke-width=".8"/><path d="M5.2 8 H8.8 V11.6 H5.2z" fill="#e4f1fd" opacity=".8"/></svg>
<svg style="left:108px;top:321px" width="14" height="14" viewBox="0 0 14 14"><g transform="translate(0,13.6) scale(1,-1)"><defs><linearGradient id="gAd" x1="0" y1="1" x2="0" y2="0"><stop offset="0" stop-color="#dceefc"/><stop offset=".55" stop-color="#7fbaec"/><stop offset="1" stop-color="#4a94dc"/></linearGradient></defs><path d="M7 0.8 L13.4 7.4 H10 V12.6 H4 V7.4 H0.6z" fill="url(#gAd)" stroke="#3f82c8" stroke-width=".8"/><path d="M5.2 8 H8.8 V11.6 H5.2z" fill="#e4f1fd" opacity=".8"/></g></svg>
<div style="left:129px;top:319px;width:1px;height:17px;background:linear-gradient(#e4dcc4,#b9ac84 30%,#b9ac84 70%,#e4dcc4);"></div>
<div style="left:130px;top:319px;width:1px;height:17px;background:linear-gradient(#f3efe2,#fbf8ee 30%,#fbf8ee 70%,#f3efe2);"></div>
<svg style="left:137px;top:320px" width="15" height="16" viewBox="0 0 15 16"><text x="-0.3" y="7.6" font-family="Liberation Serif,serif" font-weight="bold" font-size="10.5" fill="#2a5f9a">А</text><text x="-0.3" y="15.6" font-family="Liberation Serif,serif" font-weight="bold" font-size="10.5" fill="#a01818">Я</text><path d="M11.6 1.6 V13" fill="none" stroke="#1a2a4a" stroke-width="1"/><path d="M9.3 11.4 H13.9 L11.6 15z" fill="#1a2a4a"/></svg>
<svg style="left:159px;top:320px" width="15" height="16" viewBox="0 0 15 16"><text x="-0.3" y="7.6" font-family="Liberation Serif,serif" font-weight="bold" font-size="10.5" fill="#a01818">Я</text><text x="-0.3" y="15.6" font-family="Liberation Serif,serif" font-weight="bold" font-size="10.5" fill="#2a5f9a">А</text><path d="M11.6 1.6 V13" fill="none" stroke="#1a2a4a" stroke-width="1"/><path d="M9.3 11.4 H13.9 L11.6 15z" fill="#1a2a4a"/></svg>
<svg style="left:386px;top:320px" width="16" height="16" viewBox="0 0 16 16"><defs><radialGradient id="gPl" cx=".42" cy=".3" r=".8"><stop offset="0" stop-color="#cfeebc"/><stop offset=".55" stop-color="#83c870"/><stop offset="1" stop-color="#4a9a40"/></radialGradient><linearGradient id="gPr" x1="0" y1="0" x2="0" y2="1"><stop offset="0" stop-color="#b4bcae"/><stop offset="1" stop-color="#7c8278"/></linearGradient></defs><circle cx="7.8" cy="8" r="7.6" fill="url(#gPr)"/><circle cx="7.8" cy="7.8" r="6.7" fill="url(#gPl)"/><path d="M7.8 3.4 V12.2 M3.4 7.8 H12.2" stroke="#4f9c42" stroke-width="3.6"/><path d="M7.8 4 V11.6 M4 7.8 H11.6" stroke="#fff" stroke-width="2.3"/></svg>
<svg style="left:411px;top:322px" width="11.5" height="11.6" viewBox="0 0 11.5 11.6"><path d="M1.4 1.4 L10 10.2 M10 1.4 L1.4 10.2" stroke="#e2574c" stroke-width="2.5" stroke-linecap="round"/><path d="M1.8 1.8 L9.6 9.8 M9.6 1.8 L1.8 9.8" stroke="#f3a097" stroke-width=".9" stroke-linecap="round"/></svg>
<svg style="left:433px;top:321px" width="14" height="14" viewBox="0 0 14 14"><path d="M7 0.8 L13.4 7.4 H10 V12.6 H4 V7.4 H0.6z" fill="#b4bcc4"/><path d="M7 2.4 L10.6 6.2 H8.8 V7.6 H5.2 V6.2 H3.4z" fill="#d4dade"/></svg>
<svg style="left:456px;top:321px" width="14" height="14" viewBox="0 0 14 14"><g transform="translate(0,13.6) scale(1,-1)"><defs><linearGradient id="gAd" x1="0" y1="1" x2="0" y2="0"><stop offset="0" stop-color="#dceefc"/><stop offset=".55" stop-color="#7fbaec"/><stop offset="1" stop-color="#4a94dc"/></linearGradient></defs><path d="M7 0.8 L13.4 7.4 H10 V12.6 H4 V7.4 H0.6z" fill="url(#gAd)" stroke="#3f82c8" stroke-width=".8"/><path d="M5.2 8 H8.8 V11.6 H5.2z" fill="#e4f1fd" opacity=".8"/></g></svg>
<div style="left:30px;top:340px;width:332px;height:149px;background:#fff;border:1px solid #b5aa86;"></div>
<div style="left:31px;top:341px;width:314px;height:20px;background:linear-gradient(#c9c1a5,#d0c9af);"></div>
<div style="left:30px;top:361px;width:316px;height:1px;background:#b5aa86;"></div>
<span id="t81" class="t br" style="left:35px;top:355px;letter-spacing:-0.025px;">Представление</span>
<div style="left:345px;top:341px;width:1px;height:147px;background:#b5aa86;"></div>
<div style="left:346px;top:342px;width:15px;height:146px;background:#f8f5e6;"></div>
<div style="left:346px;top:341px;width:15px;height:20px;background:#efebd6;"></div>
<svg style="left:350px;top:348px" width="8" height="6" viewBox="0 0 8 6"><path d="M0 6 L4 0 L8 6z" fill="#c9c9c9"/></svg>
<div style="left:346px;top:361px;width:15px;height:52px;background:linear-gradient(90deg,#e9e3ca,#efead6 40%,#d6ceac);border-top:1px solid #c9bf9c;border-bottom:1px solid #cfc6a6;"></div>
<div style="left:352px;top:386px;width:3px;height:3px;border-left:1px solid #aaa;border-top:1px solid #aaa;"></div>
<div style="left:346px;top:468px;width:15px;height:20px;background:#efebd6;border-top:1px solid #cfc6a6;"></div>
<svg style="left:350px;top:475px" width="8" height="6" viewBox="0 0 8 6"><path d="M0 0 L4 6 L8 0z" fill="#9a9a9a"/></svg>
<div style="left:31px;top:342px;width:314px;height:146px;overflow:hidden;">
<svg style="left:9px;top:24px" width="9" height="9" viewBox="0 0 9 9"><circle cx="4.5" cy="4.5" r="4" fill="#fff" stroke="#9a9a9a" stroke-width=".9"/><path d="M2.4 4.5h4.2" stroke="#666" stroke-width="1"/></svg>
<div style="left:23px;top:22px;width:13px;height:13px;background:#fff;border:1px solid #b5aa86;"><svg style="left:0.5px;top:0.5px" width="10" height="10" viewBox="0 0 10 10"><path d="M1.6 4.4 L4.1 7.2 L8.4 2" fill="none" stroke="#0a0a0a" stroke-width="2.1"/></svg></div>
<div style="left:38px;top:20px;width:64px;height:18px;background:#4d65c1;"></div>
<span id="t82" class="t w" style="left:40px;top:33.5px;">Количество</span>
<div style="left:0;top:38px;width:314px;height:1px;background:#b5aa86;"></div>
<div style="left:42px;top:41px;width:13px;height:13px;background:#fff;border:1px solid #b5aa86;"><svg style="left:0.5px;top:0.5px" width="10" height="10" viewBox="0 0 10 10"><path d="M1.6 4.4 L4.1 7.2 L8.4 2" fill="none" stroke="#0a0a0a" stroke-width="2.1"/></svg></div>
<span id="t83" class="t " style="left:58px;top:52.5px;letter-spacing:-0.030px;">в ед. хранения</span>
<div style="left:0;top:57px;width:314px;height:1px;background:#b5aa86;"></div>
<div style="left:42px;top:60px;width:13px;height:13px;background:#fff;border:1px solid #b5aa86;"><svg style="left:0.5px;top:0.5px" width="10" height="10" viewBox="0 0 10 10"><path d="M1.6 4.4 L4.1 7.2 L8.4 2" fill="none" stroke="#0a0a0a" stroke-width="2.1"/></svg></div>
<span id="t84" class="t " style="left:58px;top:71.5px;letter-spacing:0.105px;">в базовых ед.</span>
<div style="left:0;top:76px;width:314px;height:1px;background:#b5aa86;"></div>
<svg style="left:9px;top:81px" width="9" height="9" viewBox="0 0 9 9"><circle cx="4.5" cy="4.5" r="4" fill="#fff" stroke="#9a9a9a" stroke-width=".9"/><path d="M2.4 4.5h4.2" stroke="#666" stroke-width="1"/></svg>
<div style="left:23px;top:79px;width:13px;height:13px;background:#fff;border:1px solid #b5aa86;"><svg style="left:0.5px;top:0.5px" width="10" height="10" viewBox="0 0 10 10"><path d="M1.6 4.4 L4.1 7.2 L8.4 2" fill="none" stroke="#0a0a0a" stroke-width="2.1"/></svg></div>
<span id="t85" class="t " style="left:40px;top:90.5px;letter-spacing:-0.079px;">Количество неотфактурованных</span>
<div style="left:0;top:95px;width:314px;height:1px;background:#b5aa86;"></div>
<div style="left:42px;top:98px;width:13px;height:13px;background:#fff;border:1px solid #b5aa86;"><svg style="left:0.5px;top:0.5px" width="10" height="10" viewBox="0 0 10 10"><path d="M1.6 4.4 L4.1 7.2 L8.4 2" fill="none" stroke="#0a0a0a" stroke-width="2.1"/></svg></div>
<span id="t86" class="t " style="left:58px;top:109.5px;letter-spacing:-0.030px;">в ед. хранения</span>
<div style="left:0;top:114px;width:314px;height:1px;background:#b5aa86;"></div>
<div style="left:42px;top:117px;width:13px;height:13px;background:#fff;border:1px solid #b5aa86;"><svg style="left:0.5px;top:0.5px" width="10" height="10" viewBox="0 0 10 10"><path d="M1.6 4.4 L4.1 7.2 L8.4 2" fill="none" stroke="#0a0a0a" stroke-width="2.1"/></svg></div>
<span id="t87" class="t " style="left:58px;top:128.5px;letter-spacing:0.105px;">в базовых ед.</span>
<div style="left:0;top:133px;width:314px;height:1px;background:#b5aa86;"></div>
<div style="left:23px;top:136px;width:13px;height:13px;background:#fff;border:1px solid #b5aa86;"><svg style="left:0.5px;top:0.5px" width="10" height="10" viewBox="0 0 10 10"><path d="M1.6 4.4 L4.1 7.2 L8.4 2" fill="none" stroke="#0a0a0a" stroke-width="2.1"/></svg></div>
<span id="t88" class="t " style="left:40px;top:147.5px;letter-spacing:-0.080px;">Себестоимость (Рубль)</span>
<div style="left:0;top:152px;width:314px;height:1px;background:#b5aa86;"></div>
</div>
<div style="left:382px;top:340px;width:332px;height:149px;background:#fff;border:1px solid #b5aa86;"></div>
<div style="left:383px;top:341px;width:235px;height:20px;background:linear-gradient(#c9c1a5,#d0c9af);"></div>
<div style="left:619px;top:341px;width:94px;height:20px;background:#efebd6;"></div>
<div style="left:618px;top:341px;width:1px;height:59px;background:#b5aa86;"></div>
<div style="left:383px;top:361px;width:330px;height:1px;background:#b5aa86;"></div>
<div style="left:383px;top:380px;width:330px;height:1px;background:#b5aa86;"></div>
<div style="left:383px;top:399px;width:330px;height:1px;background:#b5aa86;"></div>
<span id="t89" class="t br" style="left:387px;top:355px;letter-spacing:0.142px;">Группировки строк</span>
<span id="t90" class="t br" style="left:623px;top:355px;letter-spacing:0.219px;">Тип</span>
<div style="left:383px;top:362px;width:235px;height:18px;background:#4d65c1;border:1px dotted #d9cf9a;"></div>
<span id="t91" class="t w" style="left:387px;top:375.6px;letter-spacing:-0.169px;">Склад</span>
<span id="t92" class="t " style="left:623px;top:375.6px;letter-spacing:-0.098px;">Элементы</span>
<span id="t93" class="t " style="left:387px;top:394.6px;">Номенклатура</span>
<span id="t94" class="t " style="left:623px;top:394.6px;letter-spacing:-0.098px;">Элементы</span>
<div style="left:378px;top:396px;width:341px;height:38px;background:#fff;border:3px solid #ff0000;border-left-width:4px;border-radius:1px;"></div>
<span id="t95" class="t red" style="left:392px;top:421px;letter-spacing:-0.249px;">Заказ покупателя по который указан в поступл</span>
<span id="t96" class="t hd" style="left:30px;top:507px;letter-spacing:-0.255px;">Отборы</span>
<div style="left:30px;top:510px;width:684px;height:1px;background:#c2b890;"></div>
<svg style="left:34px;top:516px" width="16" height="16" viewBox="0 0 16 16"><defs><radialGradient id="gPl" cx=".42" cy=".3" r=".8"><stop offset="0" stop-color="#cfeebc"/><stop offset=".55" stop-color="#83c870"/><stop offset="1" stop-color="#4a9a40"/></radialGradient><linearGradient id="gPr" x1="0" y1="0" x2="0" y2="1"><stop offset="0" stop-color="#b4bcae"/><stop offset="1" stop-color="#7c8278"/></linearGradient></defs><circle cx="7.8" cy="8" r="7.6" fill="url(#gPr)"/><circle cx="7.8" cy="7.8" r="6.7" fill="url(#gPl)"/><path d="M7.8 3.4 V12.2 M3.4 7.8 H12.2" stroke="#4f9c42" stroke-width="3.6"/><path d="M7.8 4 V11.6 M4 7.8 H11.6" stroke="#fff" stroke-width="2.3"/></svg>
<svg style="left:59px;top:518.8px" width="11.5" height="11.6" viewBox="0 0 11.5 11.6"><path d="M1.4 1.4 L10 10.2 M10 1.4 L1.4 10.2" stroke="#e2574c" stroke-width="2.5" stroke-linecap="round"/><path d="M1.8 1.8 L9.6 9.8 M9.6 1.8 L1.8 9.8" stroke="#f3a097" stroke-width=".9" stroke-linecap="round"/></svg>
<svg style="left:81px;top:516px" width="15" height="15" viewBox="0 0 15 15"><defs><linearGradient id="gSq" x1="0" y1="0" x2="0" y2="1"><stop offset="0" stop-color="#c2d4e6"/><stop offset="1" stop-color="#fbfdff"/></linearGradient></defs><rect x="5.2" y="0.6" width="9.6" height="9.6" rx=".9" fill="#dfe9f3" stroke="#4c7cab" stroke-width=".9"/><rect x="3.2" y="2.6" width="9.6" height="9.6" rx=".9" fill="#e6eef6" stroke="#4c7cab" stroke-width=".9"/><rect x="1" y="4.7" width="10" height="10" rx=".9" fill="#fbfdff" stroke="#41709e" stroke-width="1"/><rect x="2" y="5.6" width="8" height="3" fill="#cfdcea"/><path d="M2.8 9.4 L5.2 12 L9.8 6.6" fill="none" stroke="#1f7a12" stroke-width="2.9"/><path d="M2.8 9.4 L5.2 12 L9.8 6.6" fill="none" stroke="#48c032" stroke-width="1.7"/></svg>
<svg style="left:104px;top:516px" width="15" height="15" viewBox="0 0 15 15"><defs><linearGradient id="gSq" x1="0" y1="0" x2="0" y2="1"><stop offset="0" stop-color="#c2d4e6"/><stop offset="1" stop-color="#fbfdff"/></linearGradient></defs><rect x="5.2" y="0.6" width="9.6" height="9.6" rx=".9" fill="#dfe9f3" stroke="#4c7cab" stroke-width=".9"/><rect x="3.2" y="2.6" width="9.6" height="9.6" rx=".9" fill="#e6eef6" stroke="#4c7cab" stroke-width=".9"/><rect x="1" y="4.7" width="10" height="10" rx=".9" fill="url(#gSq)" stroke="#41709e" stroke-width="1"/></svg>
<div style="left:30px;top:536px;width:684px;height:110px;background:#fff;border:1px solid #b5aa86;"></div>
<div style="left:31px;top:537px;width:19px;height:20px;background:#efebd6;"></div>
<div style="left:51px;top:537px;width:183px;height:20px;background:linear-gradient(#c9c1a5,#d0c9af);"></div>
<div style="left:235px;top:537px;width:478px;height:20px;background:#efebd6;"></div>
<div style="left:50px;top:537px;width:1px;height:77px;background:#b5aa86;"></div>
<div style="left:234px;top:537px;width:1px;height:77px;background:#b5aa86;"></div>
<div style="left:344px;top:537px;width:1px;height:77px;background:#b5aa86;"></div>
<div style="left:31px;top:557px;width:682px;height:1px;background:#b5aa86;"></div>
<div style="left:31px;top:576px;width:682px;height:1px;background:#b5aa86;"></div>
<div style="left:31px;top:595px;width:682px;height:1px;background:#b5aa86;"></div>
<div style="left:31px;top:614px;width:682px;height:1px;background:#b5aa86;"></div>
<span id="t97" class="t br" style="left:55px;top:551px;letter-spacing:-0.082px;">Поле</span>
<span id="t98" class="t br" style="left:239px;top:551px;letter-spacing:0.050px;">Тип сравнения</span>
<span id="t99" class="t br" style="left:349px;top:551px;letter-spacing:-0.098px;">Значение</span>
<div style="left:51px;top:558px;width:183px;height:18px;background:#4d65c1;"></div>
<div style="left:35px;top:560px;width:13px;height:13px;background:#fff;border:1px solid #b5aa86;"></div>
<div style="left:35px;top:579px;width:13px;height:13px;background:#fff;border:1px solid #b5aa86;"></div>
<div style="left:35px;top:598px;width:13px;height:13px;background:#fff;border:1px solid #b5aa86;"><svg style="left:0.5px;top:0.5px" width="10" height="10" viewBox="0 0 10 10"><path d="M1.6 4.4 L4.1 7.2 L8.4 2" fill="none" stroke="#141414" stroke-width="2.2"/></svg></div>
<span id="t100" class="t w" style="left:55px;top:572px;letter-spacing:-0.169px;">Склад</span>
<span id="t101" class="t " style="left:239px;top:572px;letter-spacing:0.138px;">В группе из списка</span>
<span id="t102" class="t " style="left:349px;top:572px;letter-spacing:0.023px;">Гольфстрим; Гольфстрим; Гольфстрим</span>
<span id="t103" class="t " style="left:55px;top:591px;">Номенклатура</span>
<span id="t104" class="t " style="left:239px;top:591px;letter-spacing:-0.028px;">Равно</span>
<span id="t105" class="t " style="left:349px;top:591px;white-space:pre;letter-spacing:-0.107px;">Манометр ДМ 05-МП-3У-100  (G 1/2) (0...1,6 МПа) 1,5</span>
<span id="t106" class="t " style="left:55px;top:610px;">Количество (в базовых ед.)</span>
<span id="t107" class="t " style="left:239px;top:610px;letter-spacing:-0.198px;">Больше</span>
<div style="left:0px;top:641px;width:1294px;height:1px;background:#fff;"></div>
<div style="left:0px;top:642px;width:1294px;height:3px;background:#cdcdcd;"></div>
<div style="left:1254px;top:642px;width:40px;height:3px;background:#f0f0f0;"></div>
</div>
</body></html>
